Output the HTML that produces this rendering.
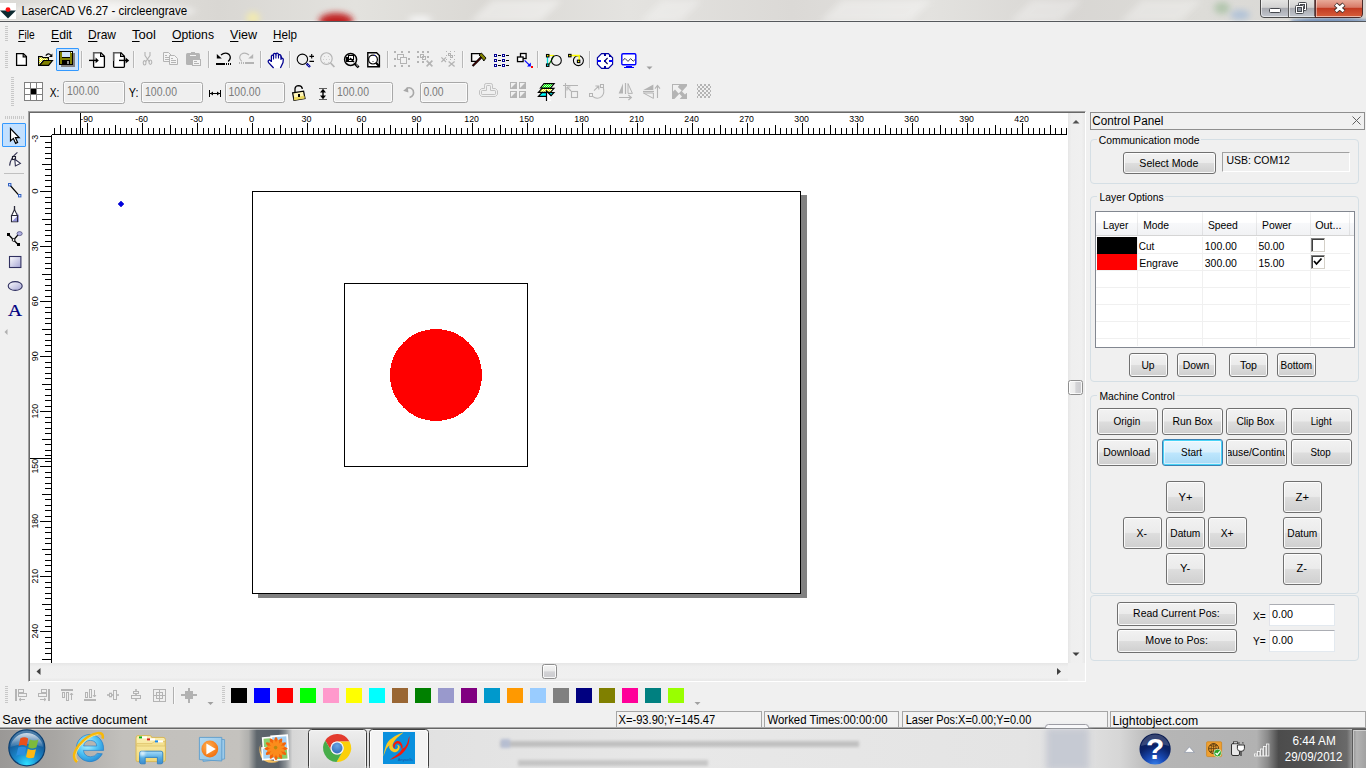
<!DOCTYPE html><html><head><meta charset="utf-8"><title>LaserCAD V6.27 - circleengrave</title><style>
html,body{margin:0;padding:0;}body{width:1366px;height:768px;overflow:hidden;position:relative;background:#f0f0f0;font-family:"Liberation Sans",sans-serif;}
body>div{position:absolute;box-sizing:border-box;}
#ov{position:absolute;left:0;top:0;font-family:"Liberation Sans",sans-serif;}
#ov path,#ov line{stroke-linecap:butt;}
</style></head><body>
<div class="client" style="left:0px;top:22px;width:1366px;height:706px;background:#f0f0f0;"></div>
<div class="titlebar" style="left:0px;top:0px;width:1366px;height:22px;background:linear-gradient(90deg,#dcdad6 0%,#e2e0dc 8%,#d9d7d3 16%,#e3e2de 26%,#dad8d4 36%,#e4e3e0 46%,#dbd9d6 58%,#e3e2df 68%,#d8d6d3 78%,#dddcd8 88%,#d6d5d2 100%);"></div>
<div style="left:0px;top:20px;width:1366px;height:1px;background:rgba(255,255,255,.45);"></div>
<div style="left:0px;top:21px;width:1366px;height:1px;background:#55585c;"></div>
<div style="left:0px;top:3px;width:16px;height:16px;background:#fff;"></div>
<div style="left:56px;top:48px;width:23px;height:23px;border:1px solid #3399ff;background:#c9e1fb;border-radius:1px;"></div>
<div style="left:63px;top:81px;width:62px;height:23px;border:1px solid #a8a8a8;border-radius:2.5px;background:#efefef;box-shadow:inset 0 0 0 1px #fafafa;"></div>
<div style="left:141px;top:82px;width:62px;height:21px;border:1px solid #a8a8a8;border-radius:2.5px;background:#efefef;box-shadow:inset 0 0 0 1px #fafafa;"></div>
<div style="left:225px;top:82px;width:60px;height:21px;border:1px solid #a8a8a8;border-radius:2.5px;background:#efefef;box-shadow:inset 0 0 0 1px #fafafa;"></div>
<div style="left:333px;top:82px;width:60px;height:21px;border:1px solid #a8a8a8;border-radius:2.5px;background:#efefef;box-shadow:inset 0 0 0 1px #fafafa;"></div>
<div style="left:420px;top:82px;width:48px;height:21px;border:1px solid #a8a8a8;border-radius:2.5px;background:#efefef;box-shadow:inset 0 0 0 1px #fafafa;"></div>
<div style="left:2px;top:123px;width:24px;height:24px;border:1px solid #3399ff;background:#c2e0ff;border-radius:1px;"></div>
<div class="canvas" style="left:28px;top:111px;width:1058px;height:571px;background:#fff;border-top:1px solid #a0a0a0;border-left:1px solid #a0a0a0;border-right:1px solid #fff;border-bottom:1px solid #fff;box-sizing:border-box;"></div>
<div style="left:29px;top:112px;width:1056px;height:569px;background:#fff;border-top:1px solid #696969;border-left:1px solid #696969;box-sizing:border-box;"></div>
<div style="left:1068px;top:113px;width:17px;height:550px;background:linear-gradient(90deg,#e6e6e6 0,#efefef 20%,#f0f0f0 80%,#e8e8e8 100%);"></div>
<div style="left:30px;top:663px;width:1038px;height:18px;background:linear-gradient(180deg,#e6e6e6 0,#efefef 20%,#f0f0f0 80%,#e8e8e8 100%);"></div>
<div style="left:1068px;top:663px;width:17px;height:18px;background:#f0f0f0;"></div>
<div style="left:1068px;top:380px;width:15px;height:15px;background:linear-gradient(90deg,#f3f3f3 0%,#ebebeb 46%,#d4d4d7 52%,#cdcdd0 85%,#d8d8da 100%);border:1px solid #8e8e8e;border-radius:2.5px;box-shadow:inset 0 0 0 1px rgba(255,255,255,.8);"></div>
<div style="left:542px;top:664px;width:15px;height:15px;background:linear-gradient(180deg,#f3f3f3 0%,#ebebeb 46%,#d4d4d7 52%,#cdcdd0 85%,#d8d8da 100%);border:1px solid #8e8e8e;border-radius:2.5px;box-shadow:inset 0 0 0 1px rgba(255,255,255,.8);"></div>
<div style="left:1090px;top:112px;width:275px;height:18px;border:1px solid #8e8e8e;background:#f0f0f0;"></div>
<div style="left:1090px;top:139px;width:269px;height:45px;border:1px solid #d5dfe5;border-radius:4px;"></div>
<div style="left:1097px;top:134px;width:104px;height:12px;background:#f0f0f0;"></div>
<div class="btn" style="left:1123px;top:152px;width:93px;height:22px;border:1px solid #707070;border-radius:3px;background:linear-gradient(180deg,#f2f2f2 0%,#ebebeb 48%,#dddddd 52%,#cfcfcf 100%);box-shadow:inset 0 0 0 1px rgba(255,255,255,.85);"></div>
<div style="left:1222px;top:152px;width:128px;height:20px;border-top:1px solid #a0a0a0;border-left:1px solid #a0a0a0;border-right:1px solid #fff;border-bottom:1px solid #fff;background:#f0f0f0;"></div>
<div style="left:1090px;top:196px;width:269px;height:186px;border:1px solid #d5dfe5;border-radius:4px;"></div>
<div style="left:1097px;top:192px;width:68px;height:12px;background:#f0f0f0;"></div>
<div style="left:1095px;top:211px;width:260px;height:137px;border:1px solid #828790;background:#fff;"></div>
<div style="left:1096px;top:212px;width:258px;height:24px;background:linear-gradient(180deg,#ffffff 0%,#ffffff 45%,#f7f8fa 50%,#f1f2f4 100%);border-bottom:1px solid #d5d5d5;"></div>
<div style="left:1137px;top:212px;width:1px;height:23px;background:linear-gradient(180deg,#f2f2f2,#dedfe1);"></div>
<div style="left:1202px;top:212px;width:1px;height:23px;background:linear-gradient(180deg,#f2f2f2,#dedfe1);"></div>
<div style="left:1256px;top:212px;width:1px;height:23px;background:linear-gradient(180deg,#f2f2f2,#dedfe1);"></div>
<div style="left:1310px;top:212px;width:1px;height:23px;background:linear-gradient(180deg,#f2f2f2,#dedfe1);"></div>
<div style="left:1349px;top:212px;width:1px;height:23px;background:linear-gradient(180deg,#f2f2f2,#dedfe1);"></div>
<div style="left:1096px;top:253px;width:254px;height:1px;background:#f0f0f0;"></div>
<div style="left:1096px;top:270px;width:254px;height:1px;background:#f0f0f0;"></div>
<div style="left:1096px;top:287px;width:254px;height:1px;background:#f0f0f0;"></div>
<div style="left:1096px;top:304px;width:254px;height:1px;background:#f0f0f0;"></div>
<div style="left:1096px;top:321px;width:254px;height:1px;background:#f0f0f0;"></div>
<div style="left:1096px;top:338px;width:254px;height:1px;background:#f0f0f0;"></div>
<div style="left:1137px;top:237px;width:1px;height:109px;background:#f0f0f0;"></div>
<div style="left:1202px;top:237px;width:1px;height:109px;background:#f0f0f0;"></div>
<div style="left:1256px;top:237px;width:1px;height:109px;background:#f0f0f0;"></div>
<div style="left:1310px;top:237px;width:1px;height:109px;background:#f0f0f0;"></div>
<div style="left:1097px;top:237px;width:40px;height:17px;background:#000;"></div>
<div style="left:1097px;top:254px;width:40px;height:16px;background:#ff0000;"></div>
<div style="left:1311px;top:238px;width:14px;height:14px;background:#fff;border-top:1px solid #808080;border-left:1px solid #808080;border-right:1px solid #d4d0c8;border-bottom:1px solid #d4d0c8;box-shadow:inset 1px 1px 0 #404040;"></div>
<div style="left:1311px;top:255px;width:14px;height:14px;background:#fff;border-top:1px solid #808080;border-left:1px solid #808080;border-right:1px solid #d4d0c8;border-bottom:1px solid #d4d0c8;box-shadow:inset 1px 1px 0 #404040;"></div>
<div class="btn" style="left:1129px;top:353px;width:39px;height:24px;border:1px solid #707070;border-radius:3px;background:linear-gradient(180deg,#f2f2f2 0%,#ebebeb 48%,#dddddd 52%,#cfcfcf 100%);box-shadow:inset 0 0 0 1px rgba(255,255,255,.85);"></div>
<div class="btn" style="left:1177px;top:353px;width:39px;height:24px;border:1px solid #707070;border-radius:3px;background:linear-gradient(180deg,#f2f2f2 0%,#ebebeb 48%,#dddddd 52%,#cfcfcf 100%);box-shadow:inset 0 0 0 1px rgba(255,255,255,.85);"></div>
<div class="btn" style="left:1229px;top:353px;width:39px;height:24px;border:1px solid #707070;border-radius:3px;background:linear-gradient(180deg,#f2f2f2 0%,#ebebeb 48%,#dddddd 52%,#cfcfcf 100%);box-shadow:inset 0 0 0 1px rgba(255,255,255,.85);"></div>
<div class="btn" style="left:1277px;top:353px;width:39px;height:24px;border:1px solid #707070;border-radius:3px;background:linear-gradient(180deg,#f2f2f2 0%,#ebebeb 48%,#dddddd 52%,#cfcfcf 100%);box-shadow:inset 0 0 0 1px rgba(255,255,255,.85);"></div>
<div style="left:1090px;top:395px;width:269px;height:199px;border:1px solid #d5dfe5;border-radius:4px;"></div>
<div style="left:1097px;top:390px;width:80px;height:12px;background:#f0f0f0;"></div>
<div class="btn" style="left:1097px;top:408px;width:61px;height:27px;border:1px solid #707070;border-radius:3px;background:linear-gradient(180deg,#f2f2f2 0%,#ebebeb 48%,#dddddd 52%,#cfcfcf 100%);box-shadow:inset 0 0 0 1px rgba(255,255,255,.85);"></div>
<div class="btn" style="left:1162px;top:408px;width:61px;height:27px;border:1px solid #707070;border-radius:3px;background:linear-gradient(180deg,#f2f2f2 0%,#ebebeb 48%,#dddddd 52%,#cfcfcf 100%);box-shadow:inset 0 0 0 1px rgba(255,255,255,.85);"></div>
<div class="btn" style="left:1226px;top:408px;width:61px;height:27px;border:1px solid #707070;border-radius:3px;background:linear-gradient(180deg,#f2f2f2 0%,#ebebeb 48%,#dddddd 52%,#cfcfcf 100%);box-shadow:inset 0 0 0 1px rgba(255,255,255,.85);"></div>
<div class="btn" style="left:1291px;top:408px;width:61px;height:27px;border:1px solid #707070;border-radius:3px;background:linear-gradient(180deg,#f2f2f2 0%,#ebebeb 48%,#dddddd 52%,#cfcfcf 100%);box-shadow:inset 0 0 0 1px rgba(255,255,255,.85);"></div>
<div class="btn" style="left:1097px;top:439px;width:61px;height:27px;border:1px solid #707070;border-radius:3px;background:linear-gradient(180deg,#f2f2f2 0%,#ebebeb 48%,#dddddd 52%,#cfcfcf 100%);box-shadow:inset 0 0 0 1px rgba(255,255,255,.85);"></div>
<div class="btn" style="left:1162px;top:439px;width:61px;height:27px;border:1px solid #3c7fb1;border-radius:3px;background:linear-gradient(180deg,#eaf6fd 0%,#d9f0fc 48%,#bee6fd 52%,#a7d9f5 100%);box-shadow:inset 0 0 0 1px #48d3f7, inset 0 0 0 2px rgba(255,255,255,.5);"></div>
<div style="left:1226px;top:439px;width:61px;height:27px;border:1px solid #707070;border-radius:3px;background:linear-gradient(180deg,#f2f2f2 0%,#ebebeb 48%,#dddddd 52%,#cfcfcf 100%);box-shadow:inset 0 0 0 1px rgba(255,255,255,.85);"></div>
<div class="btn" style="left:1291px;top:439px;width:61px;height:27px;border:1px solid #707070;border-radius:3px;background:linear-gradient(180deg,#f2f2f2 0%,#ebebeb 48%,#dddddd 52%,#cfcfcf 100%);box-shadow:inset 0 0 0 1px rgba(255,255,255,.85);"></div>
<div class="btn" style="left:1166px;top:481px;width:39px;height:32px;border:1px solid #707070;border-radius:3px;background:linear-gradient(180deg,#f2f2f2 0%,#ebebeb 48%,#dddddd 52%,#cfcfcf 100%);box-shadow:inset 0 0 0 1px rgba(255,255,255,.85);"></div>
<div class="btn" style="left:1123px;top:517px;width:39px;height:32px;border:1px solid #707070;border-radius:3px;background:linear-gradient(180deg,#f2f2f2 0%,#ebebeb 48%,#dddddd 52%,#cfcfcf 100%);box-shadow:inset 0 0 0 1px rgba(255,255,255,.85);"></div>
<div class="btn" style="left:1166px;top:517px;width:39px;height:32px;border:1px solid #707070;border-radius:3px;background:linear-gradient(180deg,#f2f2f2 0%,#ebebeb 48%,#dddddd 52%,#cfcfcf 100%);box-shadow:inset 0 0 0 1px rgba(255,255,255,.85);"></div>
<div class="btn" style="left:1208px;top:517px;width:39px;height:32px;border:1px solid #707070;border-radius:3px;background:linear-gradient(180deg,#f2f2f2 0%,#ebebeb 48%,#dddddd 52%,#cfcfcf 100%);box-shadow:inset 0 0 0 1px rgba(255,255,255,.85);"></div>
<div class="btn" style="left:1166px;top:553px;width:39px;height:32px;border:1px solid #707070;border-radius:3px;background:linear-gradient(180deg,#f2f2f2 0%,#ebebeb 48%,#dddddd 52%,#cfcfcf 100%);box-shadow:inset 0 0 0 1px rgba(255,255,255,.85);"></div>
<div class="btn" style="left:1283px;top:481px;width:39px;height:32px;border:1px solid #707070;border-radius:3px;background:linear-gradient(180deg,#f2f2f2 0%,#ebebeb 48%,#dddddd 52%,#cfcfcf 100%);box-shadow:inset 0 0 0 1px rgba(255,255,255,.85);"></div>
<div class="btn" style="left:1283px;top:517px;width:39px;height:32px;border:1px solid #707070;border-radius:3px;background:linear-gradient(180deg,#f2f2f2 0%,#ebebeb 48%,#dddddd 52%,#cfcfcf 100%);box-shadow:inset 0 0 0 1px rgba(255,255,255,.85);"></div>
<div class="btn" style="left:1283px;top:553px;width:39px;height:32px;border:1px solid #707070;border-radius:3px;background:linear-gradient(180deg,#f2f2f2 0%,#ebebeb 48%,#dddddd 52%,#cfcfcf 100%);box-shadow:inset 0 0 0 1px rgba(255,255,255,.85);"></div>
<div style="left:1090px;top:595px;width:269px;height:66px;border:1px solid #d5dfe5;border-radius:4px;"></div>
<div class="btn" style="left:1117px;top:602px;width:120px;height:24px;border:1px solid #707070;border-radius:3px;background:linear-gradient(180deg,#f2f2f2 0%,#ebebeb 48%,#dddddd 52%,#cfcfcf 100%);box-shadow:inset 0 0 0 1px rgba(255,255,255,.85);"></div>
<div class="btn" style="left:1117px;top:629px;width:120px;height:24px;border:1px solid #707070;border-radius:3px;background:linear-gradient(180deg,#f2f2f2 0%,#ebebeb 48%,#dddddd 52%,#cfcfcf 100%);box-shadow:inset 0 0 0 1px rgba(255,255,255,.85);"></div>
<div style="left:1269px;top:604px;width:66px;height:22px;background:#fff;border:1px solid #e3e9ef;border-top-color:#abadb3;border-left-color:#e2e3ea;"></div>
<div style="left:1269px;top:630px;width:66px;height:22px;background:#fff;border:1px solid #e3e9ef;border-top-color:#abadb3;border-left-color:#e2e3ea;"></div>
<div style="left:231px;top:688px;width:16px;height:15px;background:#000000;"></div>
<div style="left:254px;top:688px;width:16px;height:15px;background:#0000ff;"></div>
<div style="left:277px;top:688px;width:16px;height:15px;background:#ff0000;"></div>
<div style="left:300px;top:688px;width:16px;height:15px;background:#00ff00;"></div>
<div style="left:323px;top:688px;width:16px;height:15px;background:#ff99cc;"></div>
<div style="left:346px;top:688px;width:16px;height:15px;background:#ffff00;"></div>
<div style="left:369px;top:688px;width:16px;height:15px;background:#00ffff;"></div>
<div style="left:392px;top:688px;width:16px;height:15px;background:#996633;"></div>
<div style="left:415px;top:688px;width:16px;height:15px;background:#008000;"></div>
<div style="left:438px;top:688px;width:16px;height:15px;background:#9999cc;"></div>
<div style="left:461px;top:688px;width:16px;height:15px;background:#800080;"></div>
<div style="left:484px;top:688px;width:16px;height:15px;background:#0099cc;"></div>
<div style="left:507px;top:688px;width:16px;height:15px;background:#ff9900;"></div>
<div style="left:530px;top:688px;width:16px;height:15px;background:#99ccff;"></div>
<div style="left:553px;top:688px;width:16px;height:15px;background:#808080;"></div>
<div style="left:576px;top:688px;width:16px;height:15px;background:#000080;"></div>
<div style="left:599px;top:688px;width:16px;height:15px;background:#808000;"></div>
<div style="left:622px;top:688px;width:16px;height:15px;background:#ff0099;"></div>
<div style="left:645px;top:688px;width:16px;height:15px;background:#008080;"></div>
<div style="left:668px;top:688px;width:16px;height:15px;background:#99ff00;"></div>
<div style="left:616px;top:711px;width:146px;height:17px;border:1px solid #a6a6a6;border-bottom:none;background:#f2f2f2;"></div>
<div style="left:764px;top:711px;width:135px;height:17px;border:1px solid #a6a6a6;border-bottom:none;background:#f2f2f2;"></div>
<div style="left:902px;top:711px;width:206px;height:17px;border:1px solid #a6a6a6;border-bottom:none;background:#f2f2f2;"></div>
<div style="left:1110px;top:711px;width:256px;height:17px;border:1px solid #a6a6a6;border-bottom:none;background:#f2f2f2;"></div>
<div class="taskbar" style="left:0px;top:728px;width:1366px;height:40px;background:linear-gradient(90deg,#9a9896 0%,#a8a6a3 4%,#c2c0bc 9%,#c4c2be 17.5%,#b0b0ae 18.2%,#5e666c 18.8%,#58606a 20.4%,#8a9094 20.9%,#d6d6d6 21.4%,#dcdcdc 22.5%,#e2e2e2 32%,#e8e8e8 50%,#e4e4e4 75%,#dedede 80%,#d6d6d6 82%,#b6b6b6 84.5%,#b2b2b2 92%,#8a8a8a 92.8%,#4c4c4c 93.6%,#525252 96%,#6a6a6a 98.6%,#9a9a9a 99%,#a8a8a8 100%);"></div>
<div style="left:0px;top:727px;width:1366px;height:1px;background:#a8a8a8;"></div>
<div style="left:0px;top:728px;width:1366px;height:1px;background:#666;"></div>
<div style="left:0px;top:729px;width:1366px;height:1px;background:rgba(255,255,255,.45);"></div>
<svg id="ov" width="1366" height="768" viewBox="0 0 1366 768">
<filter id="bl3" x="-50%" y="-50%" width="200%" height="200%"><feGaussianBlur stdDeviation="3"/></filter>
<filter id="bl2" x="-50%" y="-50%" width="200%" height="200%"><feGaussianBlur stdDeviation="1.6"/></filter>
<clipPath id="tbc"><rect x="0" y="0" width="1366" height="21"/></clipPath>
<g clip-path="url(#tbc)">
<ellipse cx="336" cy="21" rx="17" ry="8" fill="#c02020" filter="url(#bl3)"/>
<ellipse cx="253" cy="18" rx="7" ry="6" fill="#f2eab0" filter="url(#bl3)"/>
<ellipse cx="420" cy="20" rx="12" ry="4" fill="#f4f4f4" filter="url(#bl3)"/>
<ellipse cx="1222" cy="8" rx="8" ry="6" fill="#8fb48a" filter="url(#bl3)" opacity=".55"/>
<ellipse cx="1240" cy="15" rx="10" ry="5" fill="#9fb8d8" filter="url(#bl3)" opacity=".7"/>
<ellipse cx="1330" cy="21" rx="40" ry="3" fill="#5a7eb0" filter="url(#bl2)" opacity=".8"/>
<path d="M60 22 L82 0 H132 L110 22 Z" fill="#fff" opacity="0.35" filter="url(#bl3)"/>
<path d="M470 22 L492 0 H562 L540 22 Z" fill="#fff" opacity="0.4" filter="url(#bl3)"/>
<path d="M640 22 L662 0 H702 L680 22 Z" fill="#fff" opacity="0.3" filter="url(#bl3)"/>
<path d="M820 22 L842 0 H932 L910 22 Z" fill="#fff" opacity="0.35" filter="url(#bl3)"/>
<path d="M1010 22 L1032 0 H1082 L1060 22 Z" fill="#fff" opacity="0.3" filter="url(#bl3)"/>
<path d="M1120 22 L1142 0 H1202 L1180 22 Z" fill="#fff" opacity="0.3" filter="url(#bl3)"/>
<ellipse cx="104" cy="11" rx="92" ry="7" fill="#fff" opacity=".55" filter="url(#bl3)"/>
</g>
<path d="M0 10.4 H16 L8 18.4 Z" fill="#0e2a30" />
<circle cx="8" cy="9.6" r="2.4" fill="#ff1010"/>
<text x="21.6" y="14.7" font-size="12" fill="#000" textLength="165.6" lengthAdjust="spacingAndGlyphs" >LaserCAD V6.27 - circleengrave</text>
<linearGradient id="cb1" x1="0" y1="0" x2="0" y2="1"><stop offset="0" stop-color="#e6e6e4"/><stop offset=".45" stop-color="#d2d2d2"/><stop offset=".5" stop-color="#a8aab0"/><stop offset="1" stop-color="#c4c8d0"/></linearGradient>
<linearGradient id="cb2" x1="0" y1="0" x2="0" y2="1"><stop offset="0" stop-color="#eab0a0"/><stop offset=".45" stop-color="#d87a68"/><stop offset=".5" stop-color="#c23a22"/><stop offset="1" stop-color="#d8603c"/></linearGradient>
<path d="M1260.5 -1 V14 Q1260.5 17.5 1264 17.5 H1315 V-1 Z" fill="url(#cb1)" stroke="#4a4a4a" stroke-width="1"/>
<path d="M1315 -1 V17.5 H1359 Q1362.5 17.5 1362.5 14 V-1 Z" fill="url(#cb2)" stroke="#4a2a2a" stroke-width="1"/>
<path d="M1261.5 0 V14 Q1261.5 16.5 1264 16.5 H1361 " fill="none" stroke="rgba(255,255,255,.55)" stroke-width="1"/>
<line x1="1288.5" y1="0" x2="1288.5" y2="17" stroke="#5a5a5a" stroke-width="1" />
<line x1="1289.5" y1="0" x2="1289.5" y2="17" stroke="rgba(255,255,255,.6)" stroke-width="1" />
<line x1="1315.5" y1="0" x2="1315.5" y2="17" stroke="#5a3030" stroke-width="1" />
<line x1="1316.5" y1="0" x2="1316.5" y2="17" stroke="rgba(255,255,255,.45)" stroke-width="1" />
<rect x="1269.5" y="8.5" width="11" height="4" rx="1" fill="#fff" stroke="#45484e"/>
<rect x="1298.5" y="2.5" width="8" height="8" rx="1" fill="#fff" stroke="#45484e"/><rect x="1300.5" y="4.5" width="4" height="4" fill="#c8ccd2" stroke="#45484e"/>
<rect x="1295.5" y="5.5" width="8" height="8" rx="1" fill="#fff" stroke="#45484e"/><rect x="1297.5" y="7.5" width="4" height="4" fill="#8c94a0" stroke="#45484e"/>
<path d="M1335.4 4.2 L1344 11.6 M1344 4.2 L1335.4 11.6" stroke="#45302c" stroke-width="4.6"/>
<path d="M1335.8 4.6 L1343.6 11.2 M1343.6 4.6 L1335.8 11.2" stroke="#fff" stroke-width="2.8"/>
<text x="18.2" y="39.2" font-size="13.5" fill="#000" textLength="16.4" lengthAdjust="spacingAndGlyphs" >File</text>
<rect x="18.2" y="41" width="7.2" height="1" fill="#000"/>
<text x="51" y="39.2" font-size="13.5" fill="#000" textLength="21" lengthAdjust="spacingAndGlyphs" >Edit</text>
<rect x="51" y="41" width="8" height="1" fill="#000"/>
<text x="88" y="39.2" font-size="13.5" fill="#000" textLength="28" lengthAdjust="spacingAndGlyphs" >Draw</text>
<rect x="88" y="41" width="9.4" height="1" fill="#000"/>
<text x="132" y="39.2" font-size="13.5" fill="#000" textLength="24" lengthAdjust="spacingAndGlyphs" >Tool</text>
<rect x="132" y="41" width="7.6" height="1" fill="#000"/>
<text x="172" y="39.2" font-size="13.5" fill="#000" textLength="42" lengthAdjust="spacingAndGlyphs" >Options</text>
<rect x="172" y="41" width="10.2" height="1" fill="#000"/>
<text x="230" y="39.2" font-size="13.5" fill="#000" textLength="27" lengthAdjust="spacingAndGlyphs" >View</text>
<rect x="230" y="41" width="8.4" height="1" fill="#000"/>
<text x="273" y="39.2" font-size="13.5" fill="#000" textLength="24" lengthAdjust="spacingAndGlyphs" >Help</text>
<rect x="273" y="41" width="9.4" height="1" fill="#000"/>
<rect x="5" y="26" width="3" height="1" fill="#c8c8c8" shape-rendering="crispEdges"/>
<rect x="5" y="28" width="3" height="1" fill="#c8c8c8" shape-rendering="crispEdges"/>
<rect x="5" y="30" width="3" height="1" fill="#c8c8c8" shape-rendering="crispEdges"/>
<rect x="5" y="32" width="3" height="1" fill="#c8c8c8" shape-rendering="crispEdges"/>
<rect x="5" y="34" width="3" height="1" fill="#c8c8c8" shape-rendering="crispEdges"/>
<rect x="5" y="36" width="3" height="1" fill="#c8c8c8" shape-rendering="crispEdges"/>
<rect x="5" y="38" width="3" height="1" fill="#c8c8c8" shape-rendering="crispEdges"/>
<rect x="5" y="40" width="3" height="1" fill="#c8c8c8" shape-rendering="crispEdges"/>
<rect x="5" y="51" width="3" height="1" fill="#c8c8c8" shape-rendering="crispEdges"/>
<rect x="5" y="53" width="3" height="1" fill="#c8c8c8" shape-rendering="crispEdges"/>
<rect x="5" y="55" width="3" height="1" fill="#c8c8c8" shape-rendering="crispEdges"/>
<rect x="5" y="57" width="3" height="1" fill="#c8c8c8" shape-rendering="crispEdges"/>
<rect x="5" y="59" width="3" height="1" fill="#c8c8c8" shape-rendering="crispEdges"/>
<rect x="5" y="61" width="3" height="1" fill="#c8c8c8" shape-rendering="crispEdges"/>
<rect x="5" y="63" width="3" height="1" fill="#c8c8c8" shape-rendering="crispEdges"/>
<rect x="5" y="65" width="3" height="1" fill="#c8c8c8" shape-rendering="crispEdges"/>
<rect x="5" y="67" width="3" height="1" fill="#c8c8c8" shape-rendering="crispEdges"/>
<path d="M16.6 53.6 H23.4 L26.4 56.6 V65.4 H16.6 Z" fill="#fff" stroke="#000" stroke-width="1.3" />
<path d="M23.2 53.8 V56.8 H26.2" fill="none" stroke="#000" stroke-width="1.2" />
<pattern id="chk" width="2" height="2" patternUnits="userSpaceOnUse"><rect width="2" height="2" fill="#ffff00"/><rect width="1" height="1" fill="#fff"/><rect x="1" y="1" width="1" height="1" fill="#fff"/></pattern>
<path d="M38.6 65.4 V56.6 H42 L43 57.6 H48.4 V60.5 H43.5 L40 65.4 Z" fill="url(#chk)" stroke="#000" stroke-width="1.2" />
<path d="M39.6 65.4 L43.6 60.5 H52.4 L48.6 65.4 Z" fill="#808000" stroke="#000" stroke-width="1.2" />
<path d="M45.8 55.6 Q48.4 52.4 51 55.4" fill="none" stroke="#000" stroke-width="1.2" />
<path d="M52.4 53.6 V57 H49 Z" fill="#000" />
<rect x="61" y="53" width="14" height="14" fill="#808080" shape-rendering="crispEdges"/>
<rect x="59" y="51" width="14" height="14" fill="#000" shape-rendering="crispEdges"/>
<rect x="60" y="52" width="2" height="12" fill="#808000" shape-rendering="crispEdges"/>
<rect x="70" y="52" width="2" height="12" fill="#808000" shape-rendering="crispEdges"/>
<rect x="62" y="58" width="8" height="2" fill="#808000" shape-rendering="crispEdges"/>
<rect x="62" y="52" width="8" height="5" fill="#cfe4fb" shape-rendering="crispEdges"/>
<rect x="62" y="51" width="8" height="1" fill="#000" shape-rendering="crispEdges"/>
<rect x="62" y="57" width="8" height="1" fill="#000" shape-rendering="crispEdges"/>
<rect x="71" y="52" width="1" height="1" fill="#fff" shape-rendering="crispEdges"/>
<rect x="62" y="60" width="8" height="4" fill="#000" shape-rendering="crispEdges"/>
<rect x="67" y="61" width="2" height="3" fill="#909090" shape-rendering="crispEdges"/>
<rect x="81" y="51" width="1" height="17" fill="#b8b8b8" shape-rendering="crispEdges"/>
<rect x="82" y="51" width="1" height="17" fill="#f8f8f8" shape-rendering="crispEdges"/>
<path d="M93.6 52.6 H100.8 L104.4 56.2 V66.6 Q104.4 67.4 103.6 67.4 H94.4 Q93.6 67.4 93.6 66.6 Z" fill="#fff" stroke="#000" stroke-width="1.3" />
<path d="M93.6 60 V52.6 H100.8" fill="none" stroke="#606060" stroke-width="1.3" />
<path d="M100.6 52.8 V56.4 H104.2" fill="none" stroke="#000" stroke-width="1.2" />
<path d="M89 60.4 H97" fill="none" stroke="#000" stroke-width="1.4" />
<path d="M95.6 57.6 L98.8 60.4 L95.6 63.2 Z" fill="#000" />
<path d="M113.6 52.6 H120.8 L124.4 56.2 V66.6 Q124.4 67.4 123.6 67.4 H114.4 Q113.6 67.4 113.6 66.6 Z" fill="#fff" stroke="#000" stroke-width="1.3" />
<path d="M113.6 61 V52.6 H120.8" fill="none" stroke="#606060" stroke-width="1.3" />
<path d="M120.6 52.8 V56.4 H124.2" fill="none" stroke="#000" stroke-width="1.2" />
<path d="M119 60.4 H127" fill="none" stroke="#000" stroke-width="1.4" />
<path d="M125.6 57.4 L129.2 60.4 L125.6 63.4 Z" fill="#000" />
<rect x="133" y="51" width="1" height="17" fill="#b8b8b8" shape-rendering="crispEdges"/>
<rect x="134" y="51" width="1" height="17" fill="#f8f8f8" shape-rendering="crispEdges"/>
<path d="M145 52 V55.5 L149.5 62 M150 52 V55.5 L145.5 62" fill="none" stroke="#b4b4b4" stroke-width="1.1" />
<ellipse cx="144.6" cy="62.8" rx="1.4" ry="2.2" fill="none" stroke="#b4b4b4" stroke-width="1.1"/>
<ellipse cx="150.4" cy="62.2" rx="1.4" ry="2.2" fill="none" stroke="#b4b4b4" stroke-width="1.1"/>
<path d="M163.5 52.5 H168.5 L171.5 55.5 V61.5 H163.5 Z" fill="#f4f4f4" stroke="#b4b4b4" stroke-width="1" />
<path d="M169.5 55.5 H174.5 L177.5 58.5 V64.5 H169.5 Z" fill="#f4f4f4" stroke="#b4b4b4" stroke-width="1" />
<rect x="165" y="55" width="2" height="1" fill="#b4b4b4" shape-rendering="crispEdges"/>
<rect x="165" y="57" width="5" height="1" fill="#b4b4b4" shape-rendering="crispEdges"/>
<rect x="165" y="59" width="4" height="1" fill="#b4b4b4" shape-rendering="crispEdges"/>
<rect x="171" y="58" width="2" height="1" fill="#b4b4b4" shape-rendering="crispEdges"/>
<rect x="171" y="60" width="5" height="1" fill="#b4b4b4" shape-rendering="crispEdges"/>
<rect x="171" y="62" width="5" height="1" fill="#b4b4b4" shape-rendering="crispEdges"/>
<rect x="186" y="53" width="14" height="12" rx="1.5" fill="#b4b4b4"/>
<rect x="191" y="52" width="4" height="1" fill="#b4b4b4" shape-rendering="crispEdges"/>
<rect x="190" y="55" width="6" height="1" fill="#f4f4f4" shape-rendering="crispEdges"/>
<rect x="192.5" y="59.5" width="8" height="6" fill="#f4f4f4" stroke="#b4b4b4"/>
<rect x="194" y="61" width="3" height="1" fill="#b4b4b4" shape-rendering="crispEdges"/>
<rect x="194" y="63" width="5" height="1" fill="#b4b4b4" shape-rendering="crispEdges"/>
<rect x="208" y="51" width="1" height="17" fill="#b8b8b8" shape-rendering="crispEdges"/>
<rect x="209" y="51" width="1" height="17" fill="#f8f8f8" shape-rendering="crispEdges"/>
<path d="M221 55 Q225 51.6 229 54.4 Q232 58 228.2 61.4" fill="none" stroke="#000" stroke-width="1.3" />
<path d="M216.8 54 L221.8 58.6 H216.8 Z" fill="#000" />
<rect x="216" y="63" width="9" height="2" fill="#000" shape-rendering="crispEdges"/>
<rect x="226" y="63" width="1" height="2" fill="#000" shape-rendering="crispEdges"/>
<rect x="228" y="63" width="1" height="2" fill="#000" shape-rendering="crispEdges"/>
<rect x="230" y="63" width="1" height="2" fill="#000" shape-rendering="crispEdges"/>
<path d="M249 55 Q245 51.6 241 54.4 Q238 58 241.8 61.4" fill="none" stroke="#b4b4b4" stroke-width="1.1" />
<path d="M253.2 54 L248.2 58.6 H253.2 Z" fill="#b4b4b4" />
<rect x="245" y="62" width="9" height="2" fill="#b4b4b4" shape-rendering="crispEdges"/>
<rect x="243" y="62" width="1" height="2" fill="#b4b4b4" shape-rendering="crispEdges"/>
<rect x="241" y="62" width="1" height="2" fill="#b4b4b4" shape-rendering="crispEdges"/>
<rect x="239" y="62" width="1" height="2" fill="#b4b4b4" shape-rendering="crispEdges"/>
<rect x="260" y="51" width="1" height="17" fill="#b8b8b8" shape-rendering="crispEdges"/>
<rect x="261" y="51" width="1" height="17" fill="#f8f8f8" shape-rendering="crispEdges"/>
<path d="M273.6 68 L269 62.5 Q267.6 60.6 269.4 59.6 L271.4 60.8 V55.6 Q272.4 54.2 273.4 55.6 V54 Q274.6 52.4 275.8 54 V53.6 Q277.2 52.2 278.4 54 V55 Q279.8 53.8 280.8 55.4 L281.4 58 Q282.6 57.4 283.2 59 L283 62.4 L280.6 68 Z" fill="#fff" />
<path d="M273.6 68 L268.6 62.6 Q267.4 60.6 269.4 59.8 L271.4 61.6 M271.4 62 V56 Q272.4 54.4 273.5 56 V54.2 Q274.6 52.6 275.9 54.2 V53.8 Q277.2 52.4 278.5 54.2 V55.2 Q279.8 54 280.9 55.6 L281.4 58.4 Q282.8 57.8 283.3 59.4 L283 62.6 L280.4 68" fill="none" stroke="#000090" stroke-width="1.25" />
<path d="M273.5 56 V59.4 M275.9 54.2 V58.6 M278.5 54.2 V58.6 M281 56 V60" fill="none" stroke="#000090" stroke-width="1.1" />
<rect x="289" y="51" width="1" height="17" fill="#b8b8b8" shape-rendering="crispEdges"/>
<rect x="290" y="51" width="1" height="17" fill="#f8f8f8" shape-rendering="crispEdges"/>
<circle cx="302.4" cy="59.3" r="5.2" fill="none" stroke="#000" stroke-width="1.1"/>
<path d="M306.6 63.6 L310 67" fill="none" stroke="#000090" stroke-width="2.4" />
<path d="M307.6 64.6 L309.4 66.4" fill="none" stroke="#c0c0ff" stroke-width="0.7" />
<path d="M309.4 56.4 H314 M311.7 54 V58.6 M309.4 61.4 H314" fill="none" stroke="#000" stroke-width="1.1" />
<circle cx="326.4" cy="58.6" r="5.8" fill="none" stroke="#b4b4b4" stroke-width="1.1"/>
<path d="M330.6 63 L334.4 67" fill="none" stroke="#b4b4b4" stroke-width="1.8" />
<rect x="324" y="56" width="1" height="1" fill="#d0d0d0" shape-rendering="crispEdges"/>
<rect x="328" y="56" width="1" height="1" fill="#d0d0d0" shape-rendering="crispEdges"/>
<rect x="323" y="59" width="1" height="1" fill="#d0d0d0" shape-rendering="crispEdges"/>
<rect x="326" y="59" width="1" height="1" fill="#d0d0d0" shape-rendering="crispEdges"/>
<rect x="329" y="59" width="1" height="1" fill="#d0d0d0" shape-rendering="crispEdges"/>
<rect x="324" y="62" width="1" height="1" fill="#d0d0d0" shape-rendering="crispEdges"/>
<rect x="328" y="62" width="1" height="1" fill="#d0d0d0" shape-rendering="crispEdges"/>
<circle cx="350.6" cy="59.4" r="6" fill="none" stroke="#000" stroke-width="1.5"/>
<path d="M355 63.8 L358.6 67.4" fill="none" stroke="#000" stroke-width="2.6" />
<path d="M356.2 64.6 L358 66.4" fill="none" stroke="#fff" stroke-width="0.8" />
<rect x="348" y="55" width="6" height="5" fill="#000" shape-rendering="crispEdges"/>
<rect x="349" y="56" width="4" height="3" fill="#fff" shape-rendering="crispEdges"/>
<rect x="346" y="57" width="3" height="4" fill="#000" shape-rendering="crispEdges"/>
<rect x="346" y="61" width="8" height="1" fill="#000" shape-rendering="crispEdges"/>
<path d="M350 58 L354 62" fill="none" stroke="#000" stroke-width="1.4" />
<path d="M367.8 52.8 H376.6 L379.4 55.6 V66.8 H367.8 Z" fill="#fff" stroke="#000" stroke-width="1.4" />
<circle cx="373" cy="59.6" r="4.4" fill="#fff" stroke="#000" stroke-width="1.2"/>
<path d="M376.2 63 L379.4 66.4" fill="none" stroke="#000" stroke-width="2.2" />
<rect x="374" y="55" width="1" height="1" fill="#0000c0" shape-rendering="crispEdges"/>
<rect x="372" y="61" width="2" height="1" fill="#a0a0a0" shape-rendering="crispEdges"/>
<rect x="387" y="51" width="1" height="17" fill="#b8b8b8" shape-rendering="crispEdges"/>
<rect x="388" y="51" width="1" height="17" fill="#f8f8f8" shape-rendering="crispEdges"/>
<rect x="394" y="51" width="2" height="2" fill="#b4b4b4" shape-rendering="crispEdges"/>
<rect x="401" y="51" width="2" height="2" fill="#b4b4b4" shape-rendering="crispEdges"/>
<rect x="408" y="51" width="2" height="2" fill="#b4b4b4" shape-rendering="crispEdges"/>
<rect x="394" y="58" width="2" height="2" fill="#b4b4b4" shape-rendering="crispEdges"/>
<rect x="408" y="58" width="2" height="2" fill="#b4b4b4" shape-rendering="crispEdges"/>
<rect x="394" y="65" width="2" height="2" fill="#b4b4b4" shape-rendering="crispEdges"/>
<rect x="401" y="65" width="2" height="2" fill="#b4b4b4" shape-rendering="crispEdges"/>
<rect x="408" y="65" width="2" height="2" fill="#b4b4b4" shape-rendering="crispEdges"/>
<rect x="397.5" y="54.5" width="6" height="5" fill="#f2f2f2" stroke="#b4b4b4"/>
<rect x="400.5" y="57.5" width="6" height="6" fill="#f2f2f2" stroke="#b4b4b4"/>
<rect x="417" y="51" width="2" height="2" fill="#b4b4b4" shape-rendering="crispEdges"/>
<rect x="422" y="51" width="2" height="2" fill="#b4b4b4" shape-rendering="crispEdges"/>
<rect x="427" y="51" width="2" height="2" fill="#b4b4b4" shape-rendering="crispEdges"/>
<rect x="417" y="56" width="2" height="2" fill="#b4b4b4" shape-rendering="crispEdges"/>
<rect x="427" y="56" width="2" height="2" fill="#b4b4b4" shape-rendering="crispEdges"/>
<rect x="417" y="61" width="2" height="2" fill="#b4b4b4" shape-rendering="crispEdges"/>
<rect x="422" y="61" width="2" height="2" fill="#b4b4b4" shape-rendering="crispEdges"/>
<rect x="420.5" y="54.5" width="3" height="3" fill="none" stroke="#b4b4b4"/>
<rect x="422.5" y="56.5" width="3" height="3" fill="none" stroke="#b4b4b4"/>
<path d="M426.6 60.6 L432.4 66.4 M432.4 60.6 L426.6 66.4" fill="none" stroke="#b4b4b4" stroke-width="1.6" />
<rect x="446" y="51" width="1" height="1" fill="#b4b4b4" shape-rendering="crispEdges"/>
<rect x="450" y="51" width="1" height="1" fill="#b4b4b4" shape-rendering="crispEdges"/>
<rect x="454" y="51" width="1" height="1" fill="#b4b4b4" shape-rendering="crispEdges"/>
<rect x="446" y="55" width="1" height="1" fill="#b4b4b4" shape-rendering="crispEdges"/>
<rect x="454" y="55" width="1" height="1" fill="#b4b4b4" shape-rendering="crispEdges"/>
<rect x="450" y="59" width="1" height="1" fill="#b4b4b4" shape-rendering="crispEdges"/>
<rect x="454" y="59" width="1" height="1" fill="#b4b4b4" shape-rendering="crispEdges"/>
<rect x="446" y="59" width="1" height="1" fill="#b4b4b4" shape-rendering="crispEdges"/>
<rect x="448.5" y="53.5" width="2" height="2" fill="none" stroke="#b4b4b4"/>
<rect x="450.5" y="55.5" width="2" height="2" fill="none" stroke="#b4b4b4"/>
<path d="M441.4 57.4 L446 62 M446 57.4 L441.4 62" fill="none" stroke="#b4b4b4" stroke-width="1.2" />
<path d="M448.6 61.4 L454.6 66.6 M454.6 61.4 L448.6 66.6" fill="none" stroke="#b4b4b4" stroke-width="1.3" />
<rect x="462" y="51" width="1" height="17" fill="#b8b8b8" shape-rendering="crispEdges"/>
<rect x="463" y="51" width="1" height="17" fill="#f8f8f8" shape-rendering="crispEdges"/>
<path d="M471.6 53.6 H480 L482 56 L477 61.4 H471.6 Z" fill="#f8f8f8" stroke="#000" stroke-width="1.4" />
<path d="M472.6 66 L482 56.6" fill="none" stroke="#000" stroke-width="2.2" />
<path d="M473 65.6 L481.6 57" fill="none" stroke="#800000" stroke-width="0.8" />
<path d="M479 55 L481.4 53 L486 58 L483.8 61 L482.4 58.6 Z" fill="#808000" stroke="#000" stroke-width="0.9" />
<rect x="494" y="54" width="3" height="3" fill="#000090" shape-rendering="crispEdges"/>
<rect x="495" y="55" width="1" height="1" fill="#fff" shape-rendering="crispEdges"/>
<rect x="498" y="55" width="3" height="1" fill="#000" shape-rendering="crispEdges"/>
<rect x="502" y="54" width="3" height="3" fill="#000090" shape-rendering="crispEdges"/>
<rect x="503" y="55" width="1" height="1" fill="#fff" shape-rendering="crispEdges"/>
<rect x="506" y="55" width="3" height="1" fill="#000" shape-rendering="crispEdges"/>
<rect x="494" y="59" width="3" height="3" fill="#000090" shape-rendering="crispEdges"/>
<rect x="495" y="60" width="1" height="1" fill="#fff" shape-rendering="crispEdges"/>
<rect x="498" y="60" width="3" height="1" fill="#000" shape-rendering="crispEdges"/>
<rect x="502" y="59" width="3" height="3" fill="#000090" shape-rendering="crispEdges"/>
<rect x="503" y="60" width="1" height="1" fill="#fff" shape-rendering="crispEdges"/>
<rect x="506" y="60" width="3" height="1" fill="#000" shape-rendering="crispEdges"/>
<rect x="494" y="64" width="3" height="3" fill="#000090" shape-rendering="crispEdges"/>
<rect x="495" y="65" width="1" height="1" fill="#fff" shape-rendering="crispEdges"/>
<rect x="498" y="65" width="3" height="1" fill="#000" shape-rendering="crispEdges"/>
<rect x="502" y="64" width="3" height="3" fill="#000090" shape-rendering="crispEdges"/>
<rect x="503" y="65" width="1" height="1" fill="#fff" shape-rendering="crispEdges"/>
<rect x="506" y="65" width="3" height="1" fill="#000" shape-rendering="crispEdges"/>
<rect x="520.5" y="53.5" width="5.6" height="5" fill="#fff" stroke="#000" stroke-width="1.3"/>
<rect x="517.5" y="57" width="5.6" height="4.6" fill="#fff" stroke="#000" stroke-width="1.3"/>
<path d="M524.6 60.4 L530 65.6" fill="none" stroke="#0000ff" stroke-width="1.2" />
<path d="M530.8 62.6 V66.4 H527 Z" fill="#0000ff" />
<rect x="531" y="66" width="2" height="2" fill="#ff0000" shape-rendering="crispEdges"/>
<rect x="537" y="51" width="1" height="17" fill="#b8b8b8" shape-rendering="crispEdges"/>
<rect x="538" y="51" width="1" height="17" fill="#f8f8f8" shape-rendering="crispEdges"/>
<path d="M548 55.5 H554" fill="none" stroke="#ffff00" stroke-width="1.2" />
<path d="M547.5 57 V64" fill="none" stroke="#00e0e0" stroke-width="1.3" />
<path d="M549 64.4 L554 55.8" fill="none" stroke="#007000" stroke-width="1.1" />
<circle cx="556.4" cy="60.4" r="4.9" fill="none" stroke="#000" stroke-width="1.05"/>
<rect x="546.5" y="54.5" width="2.4" height="2.4" fill="#ffff00" stroke="#000" stroke-width="1.1"/>
<rect x="546.5" y="64" width="2.4" height="2.4" fill="#00ffff" stroke="#000" stroke-width="1.1"/>
<circle cx="578.4" cy="60.6" r="5" fill="none" stroke="#000" stroke-width="1.05"/>
<path d="M570.6 55.5 H579.2 V60" fill="none" stroke="#ffff00" stroke-width="1.4" />
<rect x="568.6" y="54.4" width="2.4" height="2.4" fill="#ffff00" stroke="#000" stroke-width="1.1"/>
<rect x="577.4" y="60.2" width="2.4" height="2.4" fill="#ffff00" stroke="#000" stroke-width="1.1"/>
<rect x="589" y="51" width="1" height="17" fill="#b8b8b8" shape-rendering="crispEdges"/>
<rect x="590" y="51" width="1" height="17" fill="#f8f8f8" shape-rendering="crispEdges"/>
<path d="M601.6 53.6 H608.4 L612.6 57.8 V64.2 L608.4 68.4 H601.6 L597.4 64.2 V57.8 Z" fill="#fff" stroke="#0000a0" stroke-width="1.15" />
<rect x="604" y="53" width="2" height="3" fill="#0000a0" shape-rendering="crispEdges"/>
<rect x="604" y="66" width="2" height="3" fill="#0000a0" shape-rendering="crispEdges"/>
<rect x="597" y="60" width="4" height="2" fill="#0000ff" shape-rendering="crispEdges"/>
<rect x="609" y="60" width="4" height="2" fill="#0000ff" shape-rendering="crispEdges"/>
<rect x="609" y="55" width="2" height="2" fill="#0000a0" shape-rendering="crispEdges"/>
<path d="M607.6 58 L604.6 61 L607.6 64" fill="none" stroke="#000060" stroke-width="1.1" />
<rect x="604" y="60" width="2" height="2" fill="#0000a0" shape-rendering="crispEdges"/>
<rect x="621.8" y="53.8" width="14" height="11" rx="1.2" fill="#fff" stroke="#0000ff" stroke-width="1.4"/>
<rect x="626" y="66" width="6" height="1" fill="#0000ff" shape-rendering="crispEdges"/>
<rect x="624" y="67" width="10" height="1" fill="#0000ff" shape-rendering="crispEdges"/>
<path d="M622.6 60.6 L625 58.4 L628 61.4 L630.6 58.6 L633.2 61.2 L635 59.6" fill="none" stroke="#202040" stroke-width="0.9" />
<path d="M646.5 66.5 H652.5 L649.5 69.5 Z" fill="#a0a0a0" />
<rect x="11" y="77" width="3" height="1" fill="#c8c8c8" shape-rendering="crispEdges"/>
<rect x="11" y="79" width="3" height="1" fill="#c8c8c8" shape-rendering="crispEdges"/>
<rect x="11" y="81" width="3" height="1" fill="#c8c8c8" shape-rendering="crispEdges"/>
<rect x="11" y="83" width="3" height="1" fill="#c8c8c8" shape-rendering="crispEdges"/>
<rect x="11" y="85" width="3" height="1" fill="#c8c8c8" shape-rendering="crispEdges"/>
<rect x="11" y="87" width="3" height="1" fill="#c8c8c8" shape-rendering="crispEdges"/>
<rect x="11" y="89" width="3" height="1" fill="#c8c8c8" shape-rendering="crispEdges"/>
<rect x="11" y="91" width="3" height="1" fill="#c8c8c8" shape-rendering="crispEdges"/>
<rect x="11" y="93" width="3" height="1" fill="#c8c8c8" shape-rendering="crispEdges"/>
<rect x="11" y="95" width="3" height="1" fill="#c8c8c8" shape-rendering="crispEdges"/>
<rect x="11" y="97" width="3" height="1" fill="#c8c8c8" shape-rendering="crispEdges"/>
<rect x="11" y="99" width="3" height="1" fill="#c8c8c8" shape-rendering="crispEdges"/>
<rect x="11" y="101" width="3" height="1" fill="#c8c8c8" shape-rendering="crispEdges"/>
<rect x="11" y="103" width="3" height="1" fill="#c8c8c8" shape-rendering="crispEdges"/>
<rect x="11" y="105" width="3" height="1" fill="#c8c8c8" shape-rendering="crispEdges"/>
<rect x="24" y="82" width="19" height="19" fill="#808080" shape-rendering="crispEdges"/>
<rect x="25" y="83" width="5" height="5" fill="#fff" shape-rendering="crispEdges"/>
<rect x="25" y="89" width="5" height="5" fill="#fff" shape-rendering="crispEdges"/>
<rect x="25" y="95" width="5" height="5" fill="#fff" shape-rendering="crispEdges"/>
<rect x="31" y="83" width="5" height="5" fill="#fff" shape-rendering="crispEdges"/>
<rect x="31" y="89" width="5" height="5" fill="#000" shape-rendering="crispEdges"/>
<rect x="31" y="95" width="5" height="5" fill="#fff" shape-rendering="crispEdges"/>
<rect x="37" y="83" width="5" height="5" fill="#fff" shape-rendering="crispEdges"/>
<rect x="37" y="89" width="5" height="5" fill="#fff" shape-rendering="crispEdges"/>
<rect x="37" y="95" width="5" height="5" fill="#fff" shape-rendering="crispEdges"/>
<text x="49.7" y="97" font-size="12.5" fill="#000" textLength="9.6" lengthAdjust="spacingAndGlyphs" >X:</text>
<text x="67" y="95" font-size="12.7" fill="#7a7a7a" textLength="32" lengthAdjust="spacingAndGlyphs" >100.00</text>
<text x="128.8" y="97" font-size="12.5" fill="#000" textLength="9.6" lengthAdjust="spacingAndGlyphs" >Y:</text>
<text x="145" y="95.9" font-size="12.7" fill="#7a7a7a" textLength="32" lengthAdjust="spacingAndGlyphs" >100.00</text>
<path d="M209.5 90 V97 M220.5 90 V97 M210 93.5 H220" fill="none" stroke="#000" stroke-width="1" />
<path d="M210.2 93.5 L213 91.4 V95.6 Z M219.8 93.5 L217 91.4 V95.6 Z" fill="#000" />
<text x="228.5" y="95.9" font-size="12.7" fill="#7a7a7a" textLength="32" lengthAdjust="spacingAndGlyphs" >100.00</text>
<path d="M295 92.4 V88.6 Q295.4 85.6 298.6 85.6 Q302 85.8 302.4 88.8" fill="none" stroke="#000" stroke-width="1.3" />
<path d="M292.6 92.8 L303.6 91.2 L305 98.6 L294 100.4 Z" fill="#fff6b8" stroke="#000" stroke-width="1.2" />
<path d="M293.8 97.6 L304.4 95.8 L304.8 98.4 L294.2 100.2 Z" fill="#ecd85c" />
<rect x="298" y="94" width="2" height="3" fill="#000" shape-rendering="crispEdges"/>
<path d="M319 88.5 H327 M319 99.5 H327" fill="none" stroke="#606060" stroke-width="1" />
<path d="M323 90 V98" fill="none" stroke="#000" stroke-width="1.4" />
<path d="M323 88.8 L326 92.6 H320 Z M323 99.2 L326 95.4 H320 Z" fill="#000" />
<text x="337" y="95.9" font-size="12.7" fill="#7a7a7a" textLength="32" lengthAdjust="spacingAndGlyphs" >100.00</text>
<path d="M406.2 88.6 Q410.6 86.2 413.2 90.4 Q414.8 95.6 409.6 97.4" fill="none" stroke="#a8a8a8" stroke-width="1.6" />
<path d="M403.2 90.8 L407.8 87 L408.4 92.4 Z" fill="#a8a8a8" />
<text x="423.4" y="95.9" font-size="12.7" fill="#7a7a7a" textLength="20.2" lengthAdjust="spacingAndGlyphs" >0.00</text>
<path d="M484.5 85.2 Q484.5 83.5 486.2 83.5 H490.8 Q492.5 83.5 492.5 85.2 V88.5 H495.4 L497.5 90.6 V94.4 L495.4 96.5 H481.6 L479.5 94.4 V90.6 L481.6 88.5 H484.5 Z" fill="none" stroke="#c2c2c2" stroke-width="1" />
<path d="M486.5 86.2 Q486.5 85.5 487.2 85.5 H489.8 Q490.5 85.5 490.5 86.2 V90.5 H494.8 Q495.5 90.5 495.5 91.2 V93.8 Q495.5 94.5 494.8 94.5 H482.2 Q481.5 94.5 481.5 93.8 V91.2 Q481.5 90.5 482.2 90.5 H486.5 Z" fill="none" stroke="#c2c2c2" stroke-width="1" />
<rect x="510" y="82" width="7" height="7" fill="#b4b4b4" shape-rendering="crispEdges"/>
<path d="M511 83 H516 L511 88 Z" fill="#f0f0f0" />
<rect x="519" y="82" width="7" height="7" fill="#b4b4b4" shape-rendering="crispEdges"/>
<path d="M520 83 H525 L520 88 Z" fill="#f0f0f0" />
<rect x="510" y="91" width="7" height="7" fill="#b4b4b4" shape-rendering="crispEdges"/>
<path d="M511 92 H516 L511 97 Z" fill="#f0f0f0" />
<rect x="519" y="91" width="7" height="7" fill="#b4b4b4" shape-rendering="crispEdges"/>
<path d="M520 92 H525 L520 97 Z" fill="#f0f0f0" />
<pattern id="chg" width="2" height="2" patternUnits="userSpaceOnUse"><rect width="2" height="2" fill="#00ff00"/><rect width="1" height="1" fill="#c0ffc0"/><rect x="1" y="1" width="1" height="1" fill="#c0ffc0"/></pattern>
<path d="M538.4 96.4 L542 92.6 H554 L550.4 96.4 Z" fill="#00ffff" stroke="#000" stroke-width="1.1" />
<path d="M538.4 92.4 L542 88.4 H554 L550.4 92.4 Z" fill="url(#chk)" stroke="#000" stroke-width="1.1" />
<path d="M540.4 88 L544 83.6 H554.2 L550.6 88 Z" fill="url(#chg)" stroke="#000" stroke-width="1.1" />
<path d="M546.5 101 V91.4 L552.4 97.6 H549.6 L551.4 101 H546.5 Z" fill="#fff" />
<path d="M546.5 101 V91 L551.4 96" fill="none" stroke="#000" stroke-width="1.2" />
<path d="M563 85.5 H578 M565.5 83 V98" fill="none" stroke="#b4b4b4" stroke-width="1.1" />
<rect x="571.5" y="91.5" width="6" height="6" fill="none" stroke="#b4b4b4" stroke-width="1.1"/>
<path d="M567.4 87.4 L571 91" fill="none" stroke="#b4b4b4" stroke-width="1.1" />
<path d="M567 87 H570.4 M567 87 V90.4" fill="none" stroke="#b4b4b4" stroke-width="1.1" />
<rect x="589.5" y="93.5" width="3" height="3" fill="none" stroke="#b4b4b4"/>
<rect x="600.5" y="84.5" width="3" height="3" fill="none" stroke="#b4b4b4"/>
<path d="M592.6 96.4 Q597 100 601.6 96.6 Q604.8 93.4 603.4 88" fill="none" stroke="#b4b4b4" stroke-width="1.1" />
<path d="M594 90.6 L598.4 86.4 M595.4 86 H598.8 V89.4" fill="none" stroke="#b4b4b4" stroke-width="1.1" />
<path d="M618.6 93.4 L623 83.6 V93.4 Z" fill="#b4b4b4" />
<path d="M632.4 93.4 L628 83.6 V93.4 Z" fill="none" stroke="#b4b4b4" stroke-width="1" />
<path d="M625.5 83 V94" fill="none" stroke="#b4b4b4" stroke-width="1.2" />
<path d="M619 97.5 H631 M628.4 95 L631.4 97.5 L628.4 100" fill="none" stroke="#b4b4b4" stroke-width="1.1" />
<path d="M643.4 90 L653.4 84.6 V90 Z" fill="#b4b4b4" />
<path d="M643.4 93 L653.4 98.4 V93 Z" fill="none" stroke="#b4b4b4" stroke-width="1" />
<path d="M643 91.5 H654" fill="none" stroke="#b4b4b4" stroke-width="1.2" />
<path d="M657.5 98 V86 M655 88.6 L657.5 85.4 L660 88.6" fill="none" stroke="#b4b4b4" stroke-width="1.1" />
<rect x="672" y="84" width="15" height="15" fill="#b4b4b4" shape-rendering="crispEdges"/>
<path d="M673 85 H679.4 L677.8 87 L681.6 90.6 L678.6 93.4 L675 89.6 L673 91.4 Z" fill="#f1f1f1" />
<path d="M687 86 L682 91.5 L685 94.6 L687 92.6 Z" fill="#f1f1f1" />
<path d="M674.4 99 L679.4 93.8 L682 96.4 L679.6 99 Z" fill="#f1f1f1" />
<pattern id="ckg" width="4" height="4" patternUnits="userSpaceOnUse"><rect width="2" height="2" fill="#b4b4b4"/><rect x="2" y="2" width="2" height="2" fill="#b4b4b4"/></pattern>
<rect x="697" y="84" width="14" height="14" fill="url(#ckg)"/>
<rect x="5" y="116" width="1" height="3" fill="#c8c8c8" shape-rendering="crispEdges"/>
<rect x="7" y="116" width="1" height="3" fill="#c8c8c8" shape-rendering="crispEdges"/>
<rect x="9" y="116" width="1" height="3" fill="#c8c8c8" shape-rendering="crispEdges"/>
<rect x="11" y="116" width="1" height="3" fill="#c8c8c8" shape-rendering="crispEdges"/>
<rect x="13" y="116" width="1" height="3" fill="#c8c8c8" shape-rendering="crispEdges"/>
<rect x="15" y="116" width="1" height="3" fill="#c8c8c8" shape-rendering="crispEdges"/>
<rect x="17" y="116" width="1" height="3" fill="#c8c8c8" shape-rendering="crispEdges"/>
<rect x="19" y="116" width="1" height="3" fill="#c8c8c8" shape-rendering="crispEdges"/>
<rect x="21" y="116" width="1" height="3" fill="#c8c8c8" shape-rendering="crispEdges"/>
<rect x="23" y="116" width="1" height="3" fill="#c8c8c8" shape-rendering="crispEdges"/>
<path d="M10.5 128.6 V141 L13.4 138.4 L15.6 143.4 L17.6 142.4 L15.4 137.6 H19.2 Z" fill="#fff" stroke="#000" stroke-width="1.2" />
<path d="M9.6 165.6 Q10.4 158 17.4 152.4" fill="none" stroke="#303050" stroke-width="1.2" />
<rect x="12.5" y="156.5" width="3" height="3" fill="#f4f4f4" stroke="#202030" stroke-width="1.1"/>
<path d="M14.8 159.2 L20.4 163.4 L15.4 166 Z" fill="#fff" stroke="#303050" stroke-width="1.1" />
<rect x="4" y="173" width="20" height="1" fill="#c0c0c0" shape-rendering="crispEdges"/>
<path d="M9.8 185 L19 195.4" fill="none" stroke="#000" stroke-width="1.15" />
<rect x="8.5" y="183.5" width="2.4" height="2.4" fill="#dfe8ff" stroke="#3060c0"/>
<rect x="18.5" y="194.5" width="2.4" height="2.4" fill="#dfe8ff" stroke="#3060c0"/>
<path d="M17.4 212.5 L18.8 215.6 V222 H17.6 Z" fill="#8c8cd8" />
<path d="M14.5 206 V210" fill="none" stroke="#282838" stroke-width="1.3" />
<path d="M14.5 209.6 L11.6 215.6 H17.4 Z" fill="#fff" stroke="#282838" stroke-width="1.1" />
<path d="M11.5 215.5 H17.5 V221.8 H11.5 Z" fill="#f6f6ff" stroke="#282838" stroke-width="1.1" />
<path d="M12.2 221.2 L17 216.6 V221.2 Z" fill="#9090d8" />
<path d="M8 234 L13.6 240 L18.6 245 M13.6 240 L18.4 234.4" fill="none" stroke="#000" stroke-width="1.3" />
<rect x="7" y="233" width="3" height="3" fill="#000" shape-rendering="crispEdges"/>
<rect x="17" y="243" width="3" height="3" fill="#000" shape-rendering="crispEdges"/>
<circle cx="13.6" cy="240" r="1.4" fill="#fff" stroke="#000" stroke-width="0.9"/>
<ellipse cx="19.6" cy="233.6" rx="2.6" ry="2" fill="#b0b0e0" stroke="#505080" stroke-width="0.8"/>
<linearGradient id="lg1" x1="0" y1="0" x2="1" y2="1"><stop offset="0" stop-color="#fff"/><stop offset="1" stop-color="#a4a4d4"/></linearGradient>
<rect x="9.5" y="256.5" width="11.4" height="11" fill="url(#lg1)" stroke="#303060" stroke-width="1.1"/>
<ellipse cx="15.2" cy="286" rx="7" ry="4.4" fill="url(#lg1)" stroke="#303060" stroke-width="1.1"/>
<text x="8" y="315.6" font-size="16.6" fill="#000080" textLength="14" lengthAdjust="spacingAndGlyphs" font-family='"Liberation Serif", serif' stroke="#000080" stroke-width="0.2">A</text>
<path d="M7.5 329 V335 L4.5 332 Z" fill="#b0b0b0" />
<path d="M1072.5 123.5 L1076 120 L1079.5 123.5 Z" fill="#505050" />
<path d="M1072.5 652.5 L1076 656 L1079.5 652.5 Z" fill="#404040" />
<path d="M40.5 668 L36.5 671.5 L40.5 675 Z" fill="#404040" />
<path d="M1057 668 L1061 671.5 L1057 675 Z" fill="#404040" />
<rect x="258" y="195" width="549" height="403" fill="#808080" />
<rect x="252.5" y="191.5" width="548" height="402" fill="#fff" stroke="#000" stroke-width="1" />
<rect x="344.5" y="283.5" width="183" height="183" fill="none" stroke="#000" stroke-width="1" />
<circle cx="436" cy="375" r="46" fill="#ff0000" shape-rendering="crispEdges"/>
<path d="M121 201 L124 204 L121 207 L118 204 Z" fill="#0000e0" stroke="#0000c0" stroke-width="0.5" />
<line x1="52" y1="134.5" x2="1067" y2="134.5" stroke="#000" stroke-width="1" />
<path d="M54.5 128V134 M60.5 125V134 M65.5 128V134 M71.5 128V134 M76.5 128V134 M82.5 128V134 M87.5 123V134 M93.5 128V134 M98.5 128V134 M104.5 128V134 M109.5 128V134 M115.5 125V134 M120.5 128V134 M126.5 128V134 M131.5 128V134 M137.5 128V134 M142.5 123V134 M148.5 128V134 M153.5 128V134 M159.5 128V134 M164.5 128V134 M170.5 125V134 M175.5 128V134 M181.5 128V134 M186.5 128V134 M192.5 128V134 M197.5 123V134 M203.5 128V134 M208.5 128V134 M214.5 128V134 M219.5 128V134 M225.5 125V134 M230.5 128V134 M236.5 128V134 M241.5 128V134 M247.5 128V134 M252.5 123V134 M258.5 128V134 M263.5 128V134 M269.5 128V134 M274.5 128V134 M280.5 125V134 M285.5 128V134 M291.5 128V134 M296.5 128V134 M302.5 128V134 M307.5 123V134 M313.5 128V134 M318.5 128V134 M324.5 128V134 M329.5 128V134 M335.5 125V134 M340.5 128V134 M346.5 128V134 M351.5 128V134 M357.5 128V134 M362.5 123V134 M368.5 128V134 M373.5 128V134 M379.5 128V134 M384.5 128V134 M390.5 125V134 M395.5 128V134 M401.5 128V134 M406.5 128V134 M412.5 128V134 M417.5 123V134 M423.5 128V134 M428.5 128V134 M434.5 128V134 M439.5 128V134 M445.5 125V134 M450.5 128V134 M456.5 128V134 M461.5 128V134 M467.5 128V134 M472.5 123V134 M478.5 128V134 M483.5 128V134 M489.5 128V134 M494.5 128V134 M500.5 125V134 M505.5 128V134 M511.5 128V134 M516.5 128V134 M522.5 128V134 M527.5 123V134 M533.5 128V134 M538.5 128V134 M544.5 128V134 M549.5 128V134 M555.5 125V134 M560.5 128V134 M566.5 128V134 M571.5 128V134 M577.5 128V134 M582.5 123V134 M588.5 128V134 M593.5 128V134 M599.5 128V134 M604.5 128V134 M610.5 125V134 M615.5 128V134 M621.5 128V134 M626.5 128V134 M632.5 128V134 M637.5 123V134 M643.5 128V134 M648.5 128V134 M654.5 128V134 M659.5 128V134 M665.5 125V134 M670.5 128V134 M676.5 128V134 M681.5 128V134 M687.5 128V134 M692.5 123V134 M698.5 128V134 M703.5 128V134 M709.5 128V134 M714.5 128V134 M720.5 125V134 M725.5 128V134 M731.5 128V134 M736.5 128V134 M742.5 128V134 M747.5 123V134 M753.5 128V134 M758.5 128V134 M764.5 128V134 M769.5 128V134 M775.5 125V134 M780.5 128V134 M786.5 128V134 M791.5 128V134 M797.5 128V134 M802.5 123V134 M808.5 128V134 M813.5 128V134 M819.5 128V134 M824.5 128V134 M830.5 125V134 M835.5 128V134 M841.5 128V134 M846.5 128V134 M852.5 128V134 M857.5 123V134 M863.5 128V134 M868.5 128V134 M874.5 128V134 M879.5 128V134 M885.5 125V134 M890.5 128V134 M896.5 128V134 M901.5 128V134 M907.5 128V134 M912.5 123V134 M918.5 128V134 M923.5 128V134 M929.5 128V134 M934.5 128V134 M940.5 125V134 M945.5 128V134 M951.5 128V134 M956.5 128V134 M962.5 128V134 M967.5 123V134 M973.5 128V134 M978.5 128V134 M984.5 128V134 M989.5 128V134 M995.5 125V134 M1000.5 128V134 M1006.5 128V134 M1011.5 128V134 M1017.5 128V134 M1022.5 123V134 M1028.5 128V134 M1033.5 128V134 M1039.5 128V134 M1044.5 128V134 M1050.5 125V134 M1055.5 128V134 M1061.5 128V134 M1066.5 128V134" fill="none" stroke="#000" stroke-width="1" shape-rendering="crispEdges"/>
<text x="86.6" y="121.8" font-size="9.5" fill="#000" text-anchor="middle" textLength="12.8" lengthAdjust="spacingAndGlyphs" >-90</text>
<text x="141.6" y="121.8" font-size="9.5" fill="#000" text-anchor="middle" textLength="12.8" lengthAdjust="spacingAndGlyphs" >-60</text>
<text x="196.6" y="121.8" font-size="9.5" fill="#000" text-anchor="middle" textLength="12.8" lengthAdjust="spacingAndGlyphs" >-30</text>
<text x="251.6" y="121.8" font-size="9.5" fill="#000" text-anchor="middle" >0</text>
<text x="306.6" y="121.8" font-size="9.5" fill="#000" text-anchor="middle" textLength="10" lengthAdjust="spacingAndGlyphs" >30</text>
<text x="361.6" y="121.8" font-size="9.5" fill="#000" text-anchor="middle" textLength="10" lengthAdjust="spacingAndGlyphs" >60</text>
<text x="416.6" y="121.8" font-size="9.5" fill="#000" text-anchor="middle" textLength="10" lengthAdjust="spacingAndGlyphs" >90</text>
<text x="471.6" y="121.8" font-size="9.5" fill="#000" text-anchor="middle" textLength="14.6" lengthAdjust="spacingAndGlyphs" >120</text>
<text x="526.6" y="121.8" font-size="9.5" fill="#000" text-anchor="middle" textLength="14.6" lengthAdjust="spacingAndGlyphs" >150</text>
<text x="581.6" y="121.8" font-size="9.5" fill="#000" text-anchor="middle" textLength="14.6" lengthAdjust="spacingAndGlyphs" >180</text>
<text x="636.6" y="121.8" font-size="9.5" fill="#000" text-anchor="middle" textLength="14.6" lengthAdjust="spacingAndGlyphs" >210</text>
<text x="691.6" y="121.8" font-size="9.5" fill="#000" text-anchor="middle" textLength="14.6" lengthAdjust="spacingAndGlyphs" >240</text>
<text x="746.6" y="121.8" font-size="9.5" fill="#000" text-anchor="middle" textLength="14.6" lengthAdjust="spacingAndGlyphs" >270</text>
<text x="801.6" y="121.8" font-size="9.5" fill="#000" text-anchor="middle" textLength="14.6" lengthAdjust="spacingAndGlyphs" >300</text>
<text x="856.6" y="121.8" font-size="9.5" fill="#000" text-anchor="middle" textLength="14.6" lengthAdjust="spacingAndGlyphs" >330</text>
<text x="911.6" y="121.8" font-size="9.5" fill="#000" text-anchor="middle" textLength="14.6" lengthAdjust="spacingAndGlyphs" >360</text>
<text x="966.6" y="121.8" font-size="9.5" fill="#000" text-anchor="middle" textLength="14.6" lengthAdjust="spacingAndGlyphs" >390</text>
<text x="1021.6" y="121.8" font-size="9.5" fill="#000" text-anchor="middle" textLength="14.6" lengthAdjust="spacingAndGlyphs" >420</text>
<line x1="80.5" y1="113" x2="80.5" y2="134" stroke="#000" stroke-width="1" />
<line x1="30" y1="458.5" x2="51" y2="458.5" stroke="#000" stroke-width="1" />
<line x1="51.5" y1="135" x2="51.5" y2="663" stroke="#000" stroke-width="1" />
<path d="M40 136.5H51 M45 142.5H51 M45 147.5H51 M45 153.5H51 M45 158.5H51 M42 164.5H51 M45 169.5H51 M45 175.5H51 M45 180.5H51 M45 186.5H51 M40 191.5H51 M45 197.5H51 M45 202.5H51 M45 208.5H51 M45 213.5H51 M42 219.5H51 M45 224.5H51 M45 230.5H51 M45 235.5H51 M45 241.5H51 M40 246.5H51 M45 252.5H51 M45 257.5H51 M45 263.5H51 M45 268.5H51 M42 274.5H51 M45 279.5H51 M45 285.5H51 M45 290.5H51 M45 296.5H51 M40 301.5H51 M45 307.5H51 M45 312.5H51 M45 318.5H51 M45 323.5H51 M42 329.5H51 M45 334.5H51 M45 340.5H51 M45 345.5H51 M45 351.5H51 M40 356.5H51 M45 362.5H51 M45 367.5H51 M45 373.5H51 M45 378.5H51 M42 384.5H51 M45 389.5H51 M45 395.5H51 M45 400.5H51 M45 406.5H51 M40 411.5H51 M45 417.5H51 M45 422.5H51 M45 428.5H51 M45 433.5H51 M42 439.5H51 M45 444.5H51 M45 450.5H51 M45 455.5H51 M45 461.5H51 M40 466.5H51 M45 472.5H51 M45 477.5H51 M45 483.5H51 M45 488.5H51 M42 494.5H51 M45 499.5H51 M45 505.5H51 M45 510.5H51 M45 516.5H51 M40 521.5H51 M45 527.5H51 M45 532.5H51 M45 538.5H51 M45 543.5H51 M42 549.5H51 M45 554.5H51 M45 560.5H51 M45 565.5H51 M45 571.5H51 M40 576.5H51 M45 582.5H51 M45 587.5H51 M45 593.5H51 M45 598.5H51 M42 604.5H51 M45 609.5H51 M45 615.5H51 M45 620.5H51 M45 626.5H51 M40 631.5H51 M45 637.5H51 M45 642.5H51 M45 648.5H51 M45 653.5H51 M42 659.5H51" fill="none" stroke="#000" stroke-width="1" shape-rendering="crispEdges"/>
<clipPath id="vrc"><rect x="30" y="135" width="21" height="528"/></clipPath><g clip-path="url(#vrc)">
<text transform="translate(38,136.2) rotate(-90)" font-size="9.5" text-anchor="middle" textLength="12.8" lengthAdjust="spacingAndGlyphs">-30</text>
<text transform="translate(38,191.2) rotate(-90)" font-size="9.5" text-anchor="middle">0</text>
<text transform="translate(38,246.2) rotate(-90)" font-size="9.5" text-anchor="middle" textLength="10" lengthAdjust="spacingAndGlyphs">30</text>
<text transform="translate(38,301.2) rotate(-90)" font-size="9.5" text-anchor="middle" textLength="10" lengthAdjust="spacingAndGlyphs">60</text>
<text transform="translate(38,356.2) rotate(-90)" font-size="9.5" text-anchor="middle" textLength="10" lengthAdjust="spacingAndGlyphs">90</text>
<text transform="translate(38,411.2) rotate(-90)" font-size="9.5" text-anchor="middle" textLength="14.6" lengthAdjust="spacingAndGlyphs">120</text>
<text transform="translate(38,466.2) rotate(-90)" font-size="9.5" text-anchor="middle" textLength="14.6" lengthAdjust="spacingAndGlyphs">150</text>
<text transform="translate(38,521.2) rotate(-90)" font-size="9.5" text-anchor="middle" textLength="14.6" lengthAdjust="spacingAndGlyphs">180</text>
<text transform="translate(38,576.2) rotate(-90)" font-size="9.5" text-anchor="middle" textLength="14.6" lengthAdjust="spacingAndGlyphs">210</text>
<text transform="translate(38,631.2) rotate(-90)" font-size="9.5" text-anchor="middle" textLength="14.6" lengthAdjust="spacingAndGlyphs">240</text>
</g>
<text x="1092.3" y="125" font-size="12" fill="#000" textLength="71" lengthAdjust="spacingAndGlyphs" >Control Panel</text>
<path d="M1352.5 116.5 L1360.5 124.5 M1360.5 116.5 L1352.5 124.5" fill="none" stroke="#606060" stroke-width="1" />
<text x="1098.8" y="143.6" font-size="11" fill="#000" textLength="100.7" lengthAdjust="spacingAndGlyphs" >Communication mode</text>
<text x="1139.3" y="166.5" font-size="11" fill="#000" textLength="59" lengthAdjust="spacingAndGlyphs" >Select Mode</text>
<text x="1226.4" y="164" font-size="11" fill="#000" textLength="63.4" lengthAdjust="spacingAndGlyphs" >USB: COM12</text>
<text x="1099.6" y="200.6" font-size="11" fill="#000" textLength="64" lengthAdjust="spacingAndGlyphs" >Layer Options</text>
<text x="1103" y="228.6" font-size="11" fill="#000" textLength="25.4" lengthAdjust="spacingAndGlyphs" >Layer</text>
<text x="1143.2" y="228.6" font-size="11" fill="#000" textLength="25.8" lengthAdjust="spacingAndGlyphs" >Mode</text>
<text x="1207.9" y="228.6" font-size="11" fill="#000" textLength="30" lengthAdjust="spacingAndGlyphs" >Speed</text>
<text x="1262" y="228.6" font-size="11" fill="#000" textLength="29.5" lengthAdjust="spacingAndGlyphs" >Power</text>
<text x="1315.2" y="228.6" font-size="11" fill="#000" textLength="26.4" lengthAdjust="spacingAndGlyphs" >Out...</text>
<text x="1138.7" y="249.6" font-size="11" fill="#000" textLength="15.5" lengthAdjust="spacingAndGlyphs" >Cut</text>
<text x="1139.3" y="266.6" font-size="11" fill="#000" textLength="39" lengthAdjust="spacingAndGlyphs" >Engrave</text>
<text x="1204.8" y="249.6" font-size="11" fill="#000" textLength="32" lengthAdjust="spacingAndGlyphs" >100.00</text>
<text x="1204.8" y="266.6" font-size="11" fill="#000" textLength="32" lengthAdjust="spacingAndGlyphs" >300.00</text>
<text x="1258.4" y="249.6" font-size="11" fill="#000" textLength="26" lengthAdjust="spacingAndGlyphs" >50.00</text>
<text x="1258.4" y="266.6" font-size="11" fill="#000" textLength="26" lengthAdjust="spacingAndGlyphs" >15.00</text>
<path d="M1314 261 L1316.5 264 L1321.5 258.5" fill="none" stroke="#000" stroke-width="1.8" />
<text x="1141.4" y="368.5" font-size="11" fill="#000" textLength="13.2" lengthAdjust="spacingAndGlyphs" >Up</text>
<text x="1182.7" y="368.5" font-size="11" fill="#000" textLength="26.6" lengthAdjust="spacingAndGlyphs" >Down</text>
<text x="1239.9" y="368.5" font-size="11" fill="#000" textLength="17.1" lengthAdjust="spacingAndGlyphs" >Top</text>
<text x="1280.5" y="368.5" font-size="11" fill="#000" textLength="31.6" lengthAdjust="spacingAndGlyphs" >Bottom</text>
<text x="1099.5" y="399.8" font-size="11" fill="#000" textLength="75.3" lengthAdjust="spacingAndGlyphs" >Machine Control</text>
<text x="1113.5" y="425.0" font-size="11" fill="#000" textLength="26.7" lengthAdjust="spacingAndGlyphs" >Origin</text>
<text x="1172.4" y="425.0" font-size="11" fill="#000" textLength="40" lengthAdjust="spacingAndGlyphs" >Run Box</text>
<text x="1236.4" y="425.0" font-size="11" fill="#000" textLength="38" lengthAdjust="spacingAndGlyphs" >Clip Box</text>
<text x="1310.7" y="425.0" font-size="11" fill="#000" textLength="21" lengthAdjust="spacingAndGlyphs" >Light</text>
<text x="1103.2" y="456.0" font-size="11" fill="#000" textLength="46.8" lengthAdjust="spacingAndGlyphs" >Download</text>
<text x="1181" y="456.0" font-size="11" fill="#000" textLength="21" lengthAdjust="spacingAndGlyphs" >Start</text>
<clipPath id="pcc"><rect x="1228" y="442" width="57" height="22"/></clipPath>
<text x="1219.5" y="456" font-size="11" fill="#000" textLength="74" lengthAdjust="spacingAndGlyphs" clip-path="url(#pcc)">Pause/Continue</text>
<text x="1310.5" y="456.0" font-size="11" fill="#000" textLength="20.2" lengthAdjust="spacingAndGlyphs" >Stop</text>
<text x="1178.5" y="500.5" font-size="11" fill="#000" textLength="13.9" lengthAdjust="spacingAndGlyphs" >Y+</text>
<text x="1136.6" y="536.5" font-size="11" fill="#000" textLength="10.4" lengthAdjust="spacingAndGlyphs" >X-</text>
<text x="1170.3" y="536.5" font-size="11" fill="#000" textLength="30" lengthAdjust="spacingAndGlyphs" >Datum</text>
<text x="1220.7" y="536.5" font-size="11" fill="#000" textLength="13" lengthAdjust="spacingAndGlyphs" >X+</text>
<text x="1180" y="572.0" font-size="11" fill="#000" textLength="10.3" lengthAdjust="spacingAndGlyphs" >Y-</text>
<text x="1295.6" y="500.5" font-size="11" fill="#000" textLength="13.4" lengthAdjust="spacingAndGlyphs" >Z+</text>
<text x="1287.3" y="536.5" font-size="11" fill="#000" textLength="30" lengthAdjust="spacingAndGlyphs" >Datum</text>
<text x="1296.6" y="572.0" font-size="11" fill="#000" textLength="10.4" lengthAdjust="spacingAndGlyphs" >Z-</text>
<text x="1133.1" y="617.0" font-size="11" fill="#000" textLength="86.5" lengthAdjust="spacingAndGlyphs" >Read Current Pos:</text>
<text x="1145.3" y="644.2" font-size="11" fill="#000" textLength="62.6" lengthAdjust="spacingAndGlyphs" >Move to Pos:</text>
<text x="1252.9" y="620" font-size="11" fill="#000" textLength="12.8" lengthAdjust="spacingAndGlyphs" >X=</text>
<text x="1252.9" y="645" font-size="11" fill="#000" textLength="12.8" lengthAdjust="spacingAndGlyphs" >Y=</text>
<text x="1271.9" y="617.5" font-size="11" fill="#000" textLength="21" lengthAdjust="spacingAndGlyphs" >0.00</text>
<text x="1271.9" y="643.7" font-size="11" fill="#000" textLength="21" lengthAdjust="spacingAndGlyphs" >0.00</text>
<rect x="5" y="686" width="3" height="1" fill="#c8c8c8" shape-rendering="crispEdges"/>
<rect x="5" y="688" width="3" height="1" fill="#c8c8c8" shape-rendering="crispEdges"/>
<rect x="5" y="690" width="3" height="1" fill="#c8c8c8" shape-rendering="crispEdges"/>
<rect x="5" y="692" width="3" height="1" fill="#c8c8c8" shape-rendering="crispEdges"/>
<rect x="5" y="694" width="3" height="1" fill="#c8c8c8" shape-rendering="crispEdges"/>
<rect x="5" y="696" width="3" height="1" fill="#c8c8c8" shape-rendering="crispEdges"/>
<rect x="5" y="698" width="3" height="1" fill="#c8c8c8" shape-rendering="crispEdges"/>
<rect x="5" y="700" width="3" height="1" fill="#c8c8c8" shape-rendering="crispEdges"/>
<rect x="5" y="702" width="3" height="1" fill="#c8c8c8" shape-rendering="crispEdges"/>
<rect x="15" y="689" width="2" height="12" fill="#b4b4b4" shape-rendering="crispEdges"/>
<rect x="18.5" y="689.5" width="5" height="3" fill="none" stroke="#b4b4b4"/>
<rect x="18.5" y="693.5" width="8" height="3" fill="none" stroke="#b4b4b4"/>
<path d="M19 699.5 H25 M21 698 L19 699.5 L21 701" fill="none" stroke="#b4b4b4" stroke-width="1" />
<rect x="48" y="689" width="2" height="12" fill="#b4b4b4" shape-rendering="crispEdges"/>
<rect x="41.5" y="689.5" width="5" height="3" fill="none" stroke="#b4b4b4"/>
<rect x="38.5" y="693.5" width="8" height="3" fill="none" stroke="#b4b4b4"/>
<path d="M40 699.5 H46 M44 698 L46 699.5 L44 701" fill="none" stroke="#b4b4b4" stroke-width="1" />
<rect x="61" y="689" width="12" height="2" fill="#b4b4b4" shape-rendering="crispEdges"/>
<rect x="62.5" y="692.5" width="2" height="5" fill="none" stroke="#b4b4b4"/>
<rect x="66.5" y="692.5" width="2" height="8" fill="none" stroke="#b4b4b4"/>
<path d="M71.5 693 V700 M70 695 L71.5 693 L73 695" fill="none" stroke="#b4b4b4" stroke-width="1" />
<rect x="84" y="699" width="12" height="2" fill="#b4b4b4" shape-rendering="crispEdges"/>
<rect x="85.5" y="692.5" width="2" height="5" fill="none" stroke="#b4b4b4"/>
<rect x="89.5" y="689.5" width="2" height="8" fill="none" stroke="#b4b4b4"/>
<path d="M94.5 690 V697 M93 695 L94.5 697 L96 695" fill="none" stroke="#b4b4b4" stroke-width="1" />
<path d="M107 695 H119" fill="none" stroke="#b4b4b4" stroke-width="1.6" />
<rect x="109.5" y="693.2" width="2" height="3.6" fill="#f0f0f0" stroke="#b4b4b4"/>
<rect x="113.5" y="690.5" width="3" height="9" fill="#f0f0f0" stroke="#b4b4b4"/>
<path d="M136 689 V701" fill="none" stroke="#b4b4b4" stroke-width="1.6" />
<rect x="133.5" y="691.5" width="5" height="2" fill="#f0f0f0" stroke="#b4b4b4"/>
<rect x="131.5" y="695.5" width="9" height="3" fill="#f0f0f0" stroke="#b4b4b4"/>
<rect x="153.5" y="689.5" width="12" height="12" fill="none" stroke="#b4b4b4"/>
<rect x="156.5" y="692.5" width="6" height="6" fill="none" stroke="#b4b4b4"/>
<path d="M159.5 690 V701 M154 695.5 H165" fill="none" stroke="#b4b4b4" stroke-width="1" />
<rect x="173" y="687" width="1" height="17" fill="#b0b0b0" shape-rendering="crispEdges"/>
<rect x="174" y="687" width="1" height="17" fill="#fafafa" shape-rendering="crispEdges"/>
<rect x="181" y="694" width="16" height="2" fill="#b2b2b2" shape-rendering="crispEdges"/>
<rect x="188" y="688" width="2" height="15" fill="#b2b2b2" shape-rendering="crispEdges"/>
<rect x="185" y="691" width="8" height="8" fill="#b2b2b2" shape-rendering="crispEdges"/>
<path d="M207.5 702 H213.5 L210.5 705 Z" fill="#a0a0a0" />
<rect x="222" y="686" width="3" height="1" fill="#c8c8c8" shape-rendering="crispEdges"/>
<rect x="222" y="688" width="3" height="1" fill="#c8c8c8" shape-rendering="crispEdges"/>
<rect x="222" y="690" width="3" height="1" fill="#c8c8c8" shape-rendering="crispEdges"/>
<rect x="222" y="692" width="3" height="1" fill="#c8c8c8" shape-rendering="crispEdges"/>
<rect x="222" y="694" width="3" height="1" fill="#c8c8c8" shape-rendering="crispEdges"/>
<rect x="222" y="696" width="3" height="1" fill="#c8c8c8" shape-rendering="crispEdges"/>
<rect x="222" y="698" width="3" height="1" fill="#c8c8c8" shape-rendering="crispEdges"/>
<rect x="222" y="700" width="3" height="1" fill="#c8c8c8" shape-rendering="crispEdges"/>
<rect x="222" y="702" width="3" height="1" fill="#c8c8c8" shape-rendering="crispEdges"/>
<path d="M694.5 702 H700.5 L697.5 705 Z" fill="#a0a0a0" />
<text x="2.2" y="723.6" font-size="12" fill="#000" textLength="145" lengthAdjust="spacingAndGlyphs" >Save the active document</text>
<text x="618.5" y="723.6" font-size="12" fill="#000" textLength="96.7" lengthAdjust="spacingAndGlyphs" >X=-93.90;Y=145.47</text>
<text x="767.5" y="723.6" font-size="12" fill="#000" textLength="120" lengthAdjust="spacingAndGlyphs" >Worked Times:00:00:00</text>
<text x="905.7" y="723.6" font-size="12" fill="#000" textLength="125.6" lengthAdjust="spacingAndGlyphs" >Laser Pos:X=0.00;Y=0.00</text>
<text x="1112.5" y="724.5" font-size="12" fill="#000" textLength="85.7" lengthAdjust="spacingAndGlyphs" >Lightobject.com</text>
<g filter="url(#bl2)" opacity=".5">
<rect x="500" y="741" width="359" height="6" fill="#9a9a9a"/>
<rect x="518" y="760" width="190" height="6" fill="#a4a4a4"/>
<rect x="501" y="739" width="9" height="9" fill="#8a9ac0"/>
</g>
<rect x="1046" y="728" width="43" height="42" fill="#c4c8d2" filter="url(#bl3)" opacity=".9"/>
<clipPath id="bmp"><rect x="1040" y="720" width="56" height="8"/></clipPath>
<rect x="1045.5" y="724.5" width="43" height="8" rx="3" fill="#f8f8fa" stroke="#9c9ca4" stroke-width="1" clip-path="url(#bmp)"/>
<radialGradient id="orb" cx=".5" cy=".95" r=".95"><stop offset="0" stop-color="#2ee0ff"/><stop offset=".35" stop-color="#1a8cd0"/><stop offset=".7" stop-color="#155c9a"/><stop offset="1" stop-color="#5a86ac"/></radialGradient>
<linearGradient id="orbhi" x1="0" y1="0" x2="0" y2="1"><stop offset="0" stop-color="#fff" stop-opacity=".75"/><stop offset="1" stop-color="#fff" stop-opacity=".1"/></linearGradient>
<circle cx="26.8" cy="747.8" r="18" fill="url(#orb)" stroke="#0c3f70" stroke-width="1.2"/>
<path d="M10.4 747 A16.6 16.6 0 0 1 43.2 747 Q27 741 10.4 747 Z" fill="url(#orbhi)"/>
<path d="M20.4 738.2 Q24.4 736 28.2 738.4 L26.6 746.2 Q22.6 744 18.6 746 Z" fill="#e8501c"/>
<path d="M29.8 739.4 Q34 741.6 38.4 739.6 L36.4 747.6 Q32.4 749.4 28.2 747.2 Z" fill="#7cba3c"/>
<path d="M18.2 747.6 Q22.2 745.6 26.2 747.8 L24.4 756 Q20.4 753.8 16.2 755.8 Z" fill="#2c8ee0"/>
<path d="M27.8 748.8 Q32 751 36 749.2 L34 757.4 Q30 759.2 26 757 Z" fill="#fcb814"/>
<radialGradient id="ieg" cx=".4" cy=".35" r=".8"><stop offset="0" stop-color="#b8f4ff"/><stop offset=".5" stop-color="#4cc0f4"/><stop offset="1" stop-color="#1878c8"/></radialGradient>
<path fill-rule="evenodd" d="M103.4 746 A13.6 13.6 0 1 0 102.3 753.75 L97.2 753.4 Q95 756.8 90.4 756.8 Q84.2 756.4 83.4 750.4 H103.6 Z M83.6 746 Q84.4 740.4 90.4 740.4 Q96.2 740.6 96.8 746 Z" fill="url(#ieg)" stroke="#1a78c8" stroke-width=".6"/>
<path d="M77 762 Q70.4 756.4 79 745 Q88 734.4 98.8 733 Q104 733 102.6 738.6" fill="none" stroke="#f8b808" stroke-width="2.6" stroke-linecap="round"/>
<path d="M78 761 Q72.6 756.4 80 746 Q88.6 735.8 98.4 734.4" fill="none" stroke="#ffe070" stroke-width="1"/>
<linearGradient id="fold" x1="0" y1="0" x2="0" y2="1"><stop offset="0" stop-color="#fbefb4"/><stop offset="1" stop-color="#f0d878"/></linearGradient>
<path d="M136 738 Q136 735.6 138 735.6 H150 Q151.6 735.6 151.6 737.4 H163 Q165.4 737.4 165.4 739.6 V760 Q165.4 761.6 163.6 761.6 H137.6 Q136 761.6 136 760 Z" fill="url(#fold)" stroke="#d8b858" stroke-width="1"/>
<path d="M136.6 743.6 H152 L154 741.6 H165 V746 H136.6 Z" fill="#f4e190" stroke="#dcc068" stroke-width=".8"/>
<rect x="139" y="736.4" width="8" height="2" fill="#fff"/><rect x="139" y="736.4" width="3" height="2" fill="#10b010"/>
<rect x="147" y="738.4" width="8" height="2" fill="#fff"/><rect x="147" y="738.4" width="3" height="2" fill="#d82018"/>
<rect x="155" y="740.4" width="8" height="2" fill="#fff"/><rect x="155" y="740.4" width="3" height="2" fill="#1888e8"/>
<linearGradient id="stand" x1="0" y1="0" x2="0" y2="1"><stop offset="0" stop-color="#a8dcf8"/><stop offset=".5" stop-color="#58aee4"/><stop offset="1" stop-color="#3c8ccc"/></linearGradient>
<path d="M139.6 753 Q139.6 751.2 141.4 751.2 H161 Q162.8 751.2 162.8 753 V762 Q162.8 763.8 161 763.8 H157.4 V757.4 H145.2 V763.8 H141.4 Q139.6 763.8 139.6 762 Z" fill="url(#stand)" stroke="#2c80c4" stroke-width=".9"/>
<circle cx="142.6" cy="753.6" r="2.2" fill="#fff" filter="url(#bl2)"/>
<linearGradient id="wmp" x1="0" y1="0" x2="1" y2="1"><stop offset="0" stop-color="#b4daf2"/><stop offset="1" stop-color="#8cc0e4"/></linearGradient>
<path d="M203 738.4 L224.6 739.6 V759 L203 761.4 Z" fill="#9ccaea" stroke="#5c9ccc" stroke-width=".8"/>
<path d="M199.4 737.4 L221.8 737.4 V761 L199.4 759.6 Z" fill="url(#wmp)" stroke="#5c9ccc" stroke-width=".9"/>
<radialGradient id="wmo" cx=".4" cy=".35" r=".75"><stop offset="0" stop-color="#ffb050"/><stop offset="1" stop-color="#f06808"/></radialGradient>
<circle cx="209.8" cy="749" r="8.4" fill="url(#wmo)"/>
<path d="M206.4 743.4 L215.8 749 L206.4 754.6 Z" fill="#fff"/>
<path d="M260.6 744 Q257.6 760 279 761.6 Q266 765.4 261 757 Q258 750 260.6 744 Z" fill="#f8c060"/>
<g transform="rotate(-4 276 748)"><rect x="263.4" y="737" width="14" height="12" fill="#8cd070" stroke="#fff" stroke-width="1.6"/><rect x="274" y="749" width="13.6" height="11" fill="#88cc68" stroke="#fff" stroke-width="1.6"/><rect x="262" y="747" width="13.6" height="11.6" fill="#a8d4f4" stroke="#fff" stroke-width="1.6"/><rect x="272" y="736" width="16" height="13.4" fill="#a4d0f4" stroke="#fff" stroke-width="1.8"/></g>
<ellipse cx="276" cy="742.6" rx="2" ry="5.6" fill="#f2640c" transform="rotate(0 276 748.6)"/>
<ellipse cx="276" cy="742.6" rx="2" ry="5.6" fill="#f2640c" transform="rotate(30 276 748.6)"/>
<ellipse cx="276" cy="742.6" rx="2" ry="5.6" fill="#f2640c" transform="rotate(60 276 748.6)"/>
<ellipse cx="276" cy="742.6" rx="2" ry="5.6" fill="#f2640c" transform="rotate(90 276 748.6)"/>
<ellipse cx="276" cy="742.6" rx="2" ry="5.6" fill="#f2640c" transform="rotate(120 276 748.6)"/>
<ellipse cx="276" cy="742.6" rx="2" ry="5.6" fill="#f2640c" transform="rotate(150 276 748.6)"/>
<ellipse cx="276" cy="742.6" rx="2" ry="5.6" fill="#f2640c" transform="rotate(180 276 748.6)"/>
<ellipse cx="276" cy="742.6" rx="2" ry="5.6" fill="#f2640c" transform="rotate(210 276 748.6)"/>
<ellipse cx="276" cy="742.6" rx="2" ry="5.6" fill="#f2640c" transform="rotate(240 276 748.6)"/>
<ellipse cx="276" cy="742.6" rx="2" ry="5.6" fill="#f2640c" transform="rotate(270 276 748.6)"/>
<ellipse cx="276" cy="742.6" rx="2" ry="5.6" fill="#f2640c" transform="rotate(300 276 748.6)"/>
<ellipse cx="276" cy="742.6" rx="2" ry="5.6" fill="#f2640c" transform="rotate(330 276 748.6)"/>
<ellipse cx="276" cy="744" rx="1.6" ry="4.4" fill="#fb8c1c" transform="rotate(15 276 748.6)"/>
<ellipse cx="276" cy="744" rx="1.6" ry="4.4" fill="#fb8c1c" transform="rotate(45 276 748.6)"/>
<ellipse cx="276" cy="744" rx="1.6" ry="4.4" fill="#fb8c1c" transform="rotate(75 276 748.6)"/>
<ellipse cx="276" cy="744" rx="1.6" ry="4.4" fill="#fb8c1c" transform="rotate(105 276 748.6)"/>
<ellipse cx="276" cy="744" rx="1.6" ry="4.4" fill="#fb8c1c" transform="rotate(135 276 748.6)"/>
<ellipse cx="276" cy="744" rx="1.6" ry="4.4" fill="#fb8c1c" transform="rotate(165 276 748.6)"/>
<ellipse cx="276" cy="744" rx="1.6" ry="4.4" fill="#fb8c1c" transform="rotate(195 276 748.6)"/>
<ellipse cx="276" cy="744" rx="1.6" ry="4.4" fill="#fb8c1c" transform="rotate(225 276 748.6)"/>
<ellipse cx="276" cy="744" rx="1.6" ry="4.4" fill="#fb8c1c" transform="rotate(255 276 748.6)"/>
<ellipse cx="276" cy="744" rx="1.6" ry="4.4" fill="#fb8c1c" transform="rotate(285 276 748.6)"/>
<ellipse cx="276" cy="744" rx="1.6" ry="4.4" fill="#fb8c1c" transform="rotate(315 276 748.6)"/>
<ellipse cx="276" cy="744" rx="1.6" ry="4.4" fill="#fb8c1c" transform="rotate(345 276 748.6)"/>
<circle cx="275.6" cy="747.6" r="1.8" fill="#b88a10"/>
<linearGradient id="tbb" x1="0" y1="0" x2="0" y2="1"><stop offset="0" stop-color="#efefef"/><stop offset=".5" stop-color="#e2e2e2"/><stop offset="1" stop-color="#d4d4d4"/></linearGradient>
<rect x="308.5" y="729.5" width="58" height="40" rx="3" fill="url(#tbb)" stroke="#3e3e3e"/>
<rect x="309.5" y="730.5" width="56" height="39" rx="2.5" fill="none" stroke="#f6f6f6"/>
<rect x="369.5" y="729.5" width="59" height="40" rx="3" fill="#f3f3f3" stroke="#3e3e3e"/>
<rect x="370.5" y="730.5" width="57" height="39" rx="2.5" fill="none" stroke="#fdfdfd"/>
<path d="M337.10 741.50 L349.50 741.50 A14 14 0 0 0 325.27 740.51 L331.47 751.25 A6.5 6.5 0 0 1 337.10 741.50 Z" fill="#e33b2e"/>
<path d="M337.10 741.50 L349.50 741.50 A14 14 0 0 1 336.53 761.99 L342.73 751.25 A6.5 6.5 0 0 0 337.10 741.50 Z" fill="#fbd00a"/>
<path d="M342.73 751.25 L336.53 761.99 A14 14 0 0 1 325.27 740.51 L331.47 751.25 A6.5 6.5 0 0 0 342.73 751.25 Z" fill="#47ad4a"/>
<circle cx="337.1" cy="748" r="6.6" fill="#f4f4f4"/>
<radialGradient id="chb" cx=".5" cy=".3" r=".8"><stop offset="0" stop-color="#6aa4e4"/><stop offset="1" stop-color="#2c68b8"/></radialGradient>
<circle cx="337.1" cy="748" r="5.4" fill="url(#chb)"/>
<rect x="383" y="732" width="32" height="32" fill="#0a90de"/>
<path d="M403.2 732.4 C402.6 732.3 396.3 735.0 393.6 736.9 C390.9 738.8 388.6 740.4 386.9 743.6 C385.2 746.9 383.4 755.6 383.4 756.4 C383.3 757.2 385.6 750.4 386.6 748.6 C387.6 746.8 389.0 745.5 389.4 745.4 C389.8 745.3 388.8 746.9 389.2 747.8 C389.6 748.7 390.5 750.3 391.5 751.0 C392.5 751.7 394.0 752.4 395.2 752.2 C396.4 752.0 398.1 750.9 398.8 749.9 C399.5 748.9 399.9 747.3 399.6 746.4 C399.4 745.5 397.6 744.6 397.3 744.7 C397.0 744.9 398.2 746.5 398.0 747.3 C397.8 748.0 396.9 749.0 396.2 749.2 C395.5 749.4 394.4 749.2 393.8 748.6 C393.2 748.0 392.6 746.7 392.6 745.7 C392.6 744.7 392.8 743.8 393.6 742.4 C394.4 741.0 395.8 739.3 397.4 737.6 C399.0 735.9 403.8 732.5 403.2 732.4 Z" fill="#fcc820"/>
<path d="M409.3 736.3 C409.6 736.4 409.4 741.2 408.7 743.6 C408.0 746.0 406.6 748.3 405.0 750.4 C403.4 752.5 401.3 754.5 398.8 756.1 C396.3 757.7 390.4 760.1 390.2 759.8 C390.0 759.4 396.0 755.5 397.8 754.0 C399.6 752.5 400.4 751.9 401.2 750.6 C402.0 749.3 402.7 747.6 402.6 746.2 C402.5 744.8 401.3 742.9 400.4 742.0 C399.5 741.1 398.4 740.8 397.3 741.0 C396.2 741.2 394.8 742.2 394.1 743.1 C393.4 744.0 393.0 745.3 393.1 746.2 C393.2 747.1 394.4 748.4 394.7 748.3 C395.0 748.2 394.6 746.5 394.9 745.7 C395.2 745.0 395.8 744.1 396.4 743.8 C397.0 743.5 398.1 743.4 398.8 743.7 C399.5 744.0 400.2 744.9 400.7 745.7 C401.2 746.5 401.0 748.3 401.6 748.6 C402.2 748.9 403.5 748.5 404.4 747.6 C405.3 746.7 406.4 745.1 407.2 743.2 C408.0 741.3 409.1 736.2 409.3 736.3 Z" fill="#f41a0a"/>
<text x="398" y="761" font-size="4.2" fill="#1a50a0" textLength="15" lengthAdjust="spacingAndGlyphs" >Anywells</text>
<radialGradient id="hlp" cx=".5" cy="1.05" r="1.05"><stop offset="0" stop-color="#3a86f0"/><stop offset=".3" stop-color="#1a4cb8"/><stop offset=".62" stop-color="#0a2268"/><stop offset="1" stop-color="#0a1a4c"/></radialGradient>
<circle cx="1155.1" cy="749" r="15.6" fill="url(#hlp)"/>
<path d="M1141 746 A14.4 14.4 0 0 1 1169.2 746 Q1155 741 1141 746 Z" fill="#fff" opacity=".18"/>
<text x="1155.2" y="759.4" font-size="30" fill="#fff" text-anchor="middle" font-weight="bold" >?</text>
<path d="M1184.4 752.4 L1189.4 746.8 L1194.4 752.4 Z" fill="#fff" stroke="#9098a8" stroke-width="0.8" />
<rect x="1206.6" y="741.8" width="15" height="14.8" rx="1" fill="#f0a030" stroke="#d08820" stroke-width=".8"/>
<circle cx="1213.6" cy="748.6" r="5" fill="none" stroke="#5a3c10" stroke-width="1"/>
<path d="M1208.6 748.6 H1218.6 M1213.6 743.6 V753.6 M1210 745.4 Q1213.6 747.4 1217.2 745.4 M1210 751.8 Q1213.6 749.8 1217.2 751.8" stroke="#5a3c10" stroke-width=".8" fill="none"/>
<ellipse cx="1213.6" cy="748.6" rx="2.4" ry="5" fill="none" stroke="#5a3c10" stroke-width=".8"/>
<circle cx="1217.6" cy="753" r="3.8" fill="#28a428" stroke="#fff" stroke-width=".6"/>
<path d="M1215.6 753 L1217.2 754.8 L1219.8 751.4" fill="none" stroke="#fff" stroke-width="1.3" />
<rect x="1231.5" y="743.5" width="8" height="12" rx="1.5" fill="#e8e8e8" stroke="#303030" stroke-width="1"/>
<rect x="1233.5" y="741.8" width="4" height="2" fill="#e8e8e8" stroke="#303030" stroke-width=".8"/>
<path d="M1237.4 745 H1244.4 V748.6 Q1244.4 751.4 1241 751.4 Q1237.4 751.4 1237.4 748.6 Z" fill="#fff" stroke="#303030" stroke-width="1"/>
<path d="M1239 742 V745 M1242.8 742 V745 M1241 751.4 V756" stroke="#303030" stroke-width="1.2"/>
<path d="M1239 742.4 V745 M1242.8 742.4 V745" stroke="#fff" stroke-width=".5"/>
<rect x="1254.5" y="754" width="2.4" height="2" fill="#8e8e8e" stroke="#fafafa" stroke-width=".8"/>
<rect x="1257.5" y="751.4" width="2.4" height="4.6" fill="#8e8e8e" stroke="#fafafa" stroke-width=".8"/>
<rect x="1260.5" y="749" width="2.4" height="7" fill="#8e8e8e" stroke="#fafafa" stroke-width=".8"/>
<rect x="1263.5" y="746.6" width="2.4" height="9.4" fill="#8e8e8e" stroke="#fafafa" stroke-width=".8"/>
<rect x="1266.5" y="744" width="2.4" height="12" fill="#8e8e8e" stroke="#fafafa" stroke-width=".8"/>
<text x="1292.5" y="744.6" font-size="12" fill="#fff" textLength="43.2" lengthAdjust="spacingAndGlyphs" >6:44 AM</text>
<text x="1284.8" y="761.2" font-size="12" fill="#fff" textLength="57.6" lengthAdjust="spacingAndGlyphs" >29/09/2012</text>
<linearGradient id="sdk" x1="0" y1="0" x2="1" y2="0"><stop offset="0" stop-color="#8e8e8e"/><stop offset=".3" stop-color="#b4b4b4"/><stop offset="1" stop-color="#a0a0a0"/></linearGradient>
<rect x="1352.5" y="729.5" width="14" height="39" fill="url(#sdk)" stroke="#5a5a5a"/>
<rect x="1353.5" y="730.5" width="13" height="38" fill="none" stroke="rgba(255,255,255,.45)"/>
</svg></body></html>
